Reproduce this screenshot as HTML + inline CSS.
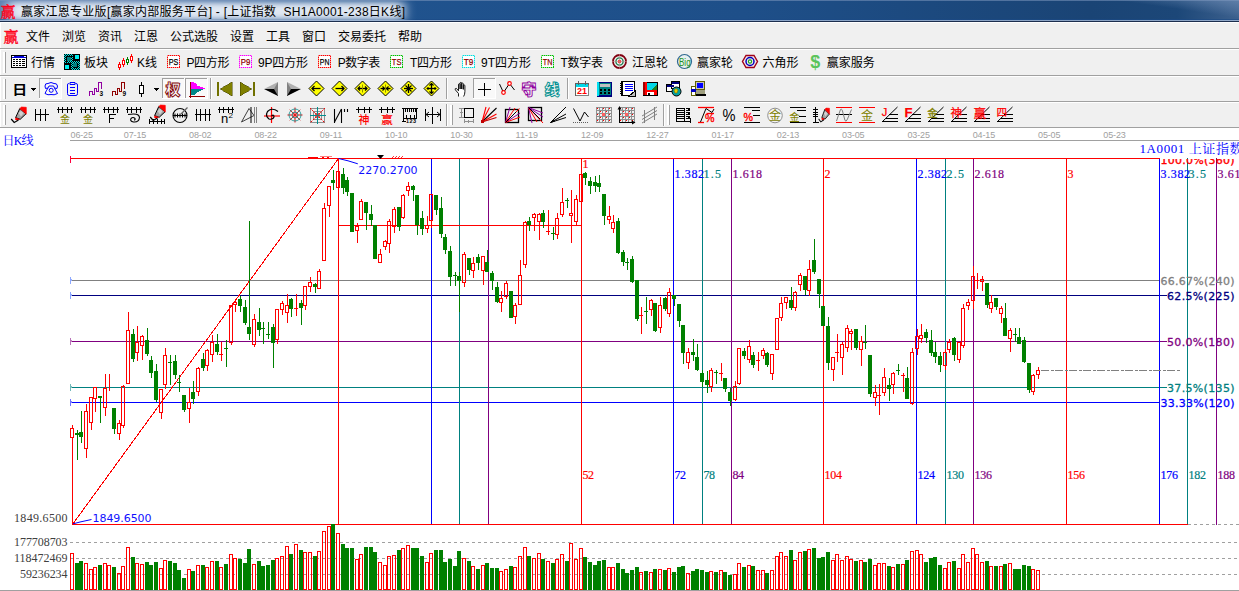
<!DOCTYPE html>
<html lang="zh"><head><meta charset="utf-8"><title>赢家江恩专业版</title>
<style>html,body{margin:0;padding:0;background:#fff;overflow:hidden}svg{display:block}
.c{shape-rendering:crispEdges}</style></head>
<body><svg width="1239" height="591" viewBox="0 0 1239 591">
<defs>
<linearGradient id="tb" x1="0" y1="0" x2="1" y2="0"><stop offset="0" stop-color="#5c7fb0"/><stop offset="0.3" stop-color="#20538e"/><stop offset="0.6" stop-color="#1e4f89"/><stop offset="0.88" stop-color="#1a4475"/><stop offset="0.95" stop-color="#1c4778"/><stop offset="1" stop-color="#3d618e"/></linearGradient>
<linearGradient id="glare" x1="0" y1="1" x2="1" y2="0"><stop offset="0.55" stop-color="#6f8db5" stop-opacity="0"/><stop offset="1" stop-color="#6f8db5" stop-opacity="0.7"/></linearGradient>
<filter id="blur" x="-10%" y="-100%" width="120%" height="300%"><feGaussianBlur stdDeviation="6 3"/></filter>
</defs>
<g class="c">
<rect x="0" y="0" width="1239" height="22" fill="url(#tb)" />
<rect x="1100" y="0" width="139" height="20" fill="url(#glare)" />
<rect x="0" y="19" width="1239" height="1" fill="#1a4a85" opacity="0.6"/>
</g>
<rect x="8" y="2" width="396" height="18" fill="#eef3fa" opacity="0.92" filter="url(#blur)"/>
<g class="c">
<rect x="0" y="0" width="1239" height="1" fill="#7d97bd" opacity="0.55"/>
<rect x="0" y="20" width="1239" height="1" fill="#a8bcd8" opacity="0.8"/>
<rect x="0" y="21" width="1239" height="1" fill="#1c2e4e" />
<rect x="0" y="22" width="1239" height="106" fill="#f0f0f0" />
<rect x="0" y="22" width="1239" height="1" fill="#ffffff" />
<rect x="0" y="22" width="1" height="106" fill="#ffffff" />
<rect x="0" y="48" width="1240" height="1" fill="#a0a0a0" />
<rect x="0" y="49" width="1240" height="1" fill="#ffffff" />
<rect x="0" y="75" width="1240" height="1" fill="#a0a0a0" />
<rect x="0" y="76" width="1240" height="1" fill="#ffffff" />
<rect x="0" y="101" width="1240" height="1" fill="#a0a0a0" />
<rect x="0" y="102" width="1240" height="1" fill="#ffffff" />
<rect x="0" y="127" width="1240" height="1" fill="#a0a0a0" />
<rect x="0" y="128" width="1239" height="463" fill="#ffffff" />
<rect x="0" y="590" width="1240" height="1" fill="#a0a0a0" />
<rect x="3" y="52" width="2" height="21" fill="#ffffff" />
<rect x="5" y="52" width="1" height="21" fill="#a0a0a0" />
<rect x="3" y="79" width="2" height="20" fill="#ffffff" />
<rect x="5" y="79" width="1" height="20" fill="#a0a0a0" />
<rect x="3" y="105" width="2" height="20" fill="#ffffff" />
<rect x="5" y="105" width="1" height="20" fill="#a0a0a0" />
</g>
<text x="0.5" y="17" font-size="15" fill="#ff0018" font-family='"Liberation Serif","Noto Serif CJK SC",serif' font-weight="400" text-anchor="start" stroke="#ff0018" stroke-width="0.35">赢</text>
<text x="21" y="15.5" font-size="12" fill="#000" font-family='"Liberation Sans","Noto Sans CJK SC",sans-serif' font-weight="normal" text-anchor="start" textLength="384" lengthAdjust="spacing" >赢家江恩专业版[赢家内部服务平台] - [上证指数&#160; SH1A0001-238日K线]</text>
<text x="3.5" y="42" font-size="15" fill="#ff0018" font-family='"Liberation Serif","Noto Serif CJK SC",serif' font-weight="400" text-anchor="start" stroke="#ff0018" stroke-width="0.35">赢</text>
<text x="26" y="40.5" font-size="12" fill="#000" font-family='"Liberation Sans","Noto Sans CJK SC",sans-serif' font-weight="normal" text-anchor="start" >文件</text>
<text x="62" y="40.5" font-size="12" fill="#000" font-family='"Liberation Sans","Noto Sans CJK SC",sans-serif' font-weight="normal" text-anchor="start" >浏览</text>
<text x="98" y="40.5" font-size="12" fill="#000" font-family='"Liberation Sans","Noto Sans CJK SC",sans-serif' font-weight="normal" text-anchor="start" >资讯</text>
<text x="134" y="40.5" font-size="12" fill="#000" font-family='"Liberation Sans","Noto Sans CJK SC",sans-serif' font-weight="normal" text-anchor="start" >江恩</text>
<text x="170" y="40.5" font-size="12" fill="#000" font-family='"Liberation Sans","Noto Sans CJK SC",sans-serif' font-weight="normal" text-anchor="start" >公式选股</text>
<text x="230" y="40.5" font-size="12" fill="#000" font-family='"Liberation Sans","Noto Sans CJK SC",sans-serif' font-weight="normal" text-anchor="start" >设置</text>
<text x="266" y="40.5" font-size="12" fill="#000" font-family='"Liberation Sans","Noto Sans CJK SC",sans-serif' font-weight="normal" text-anchor="start" >工具</text>
<text x="302" y="40.5" font-size="12" fill="#000" font-family='"Liberation Sans","Noto Sans CJK SC",sans-serif' font-weight="normal" text-anchor="start" >窗口</text>
<text x="338" y="40.5" font-size="12" fill="#000" font-family='"Liberation Sans","Noto Sans CJK SC",sans-serif' font-weight="normal" text-anchor="start" >交易委托</text>
<text x="398" y="40.5" font-size="12" fill="#000" font-family='"Liberation Sans","Noto Sans CJK SC",sans-serif' font-weight="normal" text-anchor="start" >帮助</text>
<g transform="translate(11,55)" class="c">
<rect x="0.5" y="0.5" width="15" height="12" fill="#fff" stroke="#000" stroke-width="1"/>
<rect x="1" y="1" width="14" height="2" fill="#0000d8" />
<rect x="1" y="1" width="2" height="1" fill="#fff" />
<rect x="13" y="1" width="2" height="1" fill="#fff" />
<rect x="2" y="4" width="2" height="1" fill="#000" />
<rect x="5" y="4" width="2" height="1" fill="#000" />
<rect x="8" y="4" width="2" height="1" fill="#000" />
<rect x="11" y="4" width="3" height="1" fill="#000" />
<rect x="2" y="6" width="2" height="1" fill="#000" />
<rect x="5" y="6" width="2" height="1" fill="#000" />
<rect x="8" y="6" width="2" height="1" fill="#000" />
<rect x="11" y="6" width="3" height="1" fill="#000" />
<rect x="2" y="8" width="2" height="1" fill="#000" />
<rect x="5" y="8" width="2" height="1" fill="#000" />
<rect x="8" y="8" width="2" height="1" fill="#000" />
<rect x="11" y="8" width="3" height="1" fill="#000" />
<rect x="2" y="10" width="2" height="1" fill="#000" />
<rect x="5" y="10" width="2" height="1" fill="#000" />
<rect x="8" y="10" width="2" height="1" fill="#000" />
<rect x="11" y="10" width="3" height="1" fill="#000" />
</g>
<text x="31" y="66.8" font-size="12" fill="#000" font-family='"Liberation Sans","Noto Sans CJK SC",sans-serif' font-weight="normal" text-anchor="start" >行情</text>
<g transform="translate(64,54)" class="c">
<pattern id="dot" width="2" height="2" patternUnits="userSpaceOnUse"><rect width="2" height="2" fill="#00e8e8"/><rect width="1" height="1" fill="#000"/><rect x="1" y="1" width="1" height="1" fill="#000"/></pattern>
<rect x="0" y="0" width="9" height="9" fill="url(#dot)" />
<rect x="3" y="3" width="4" height="4" fill="#008080" />
<rect x="2" y="2" width="6" height="1" fill="#000" />
<rect x="2" y="2" width="1" height="6" fill="#000" />
<rect x="9" y="0" width="7" height="7" fill="#000" />
<rect x="11" y="1" width="4" height="4" fill="#00f0f0" />
<rect x="0" y="9" width="7" height="7" fill="#000" />
<rect x="1" y="11" width="4" height="4" fill="#00f0f0" />
<rect x="7" y="7" width="9" height="9" fill="url(#dot)" />
<rect x="9" y="9" width="4" height="4" fill="#008080" />
<rect x="13" y="9" width="1" height="5" fill="#000" />
<rect x="9" y="13" width="5" height="1" fill="#000" />
</g>
<text x="84" y="66.8" font-size="12" fill="#000" font-family='"Liberation Sans","Noto Sans CJK SC",sans-serif' font-weight="normal" text-anchor="start" >板块</text>
<g transform="translate(117,54)" class="c">
<rect x="2" y="8" width="1" height="8" fill="#ff0000" />
<rect x="1.5" y="10.5" width="2" height="3" fill="#fff" stroke="#ff0000"/>
<rect x="6" y="4" width="1" height="9" fill="#ff0000" />
<rect x="5.5" y="6.5" width="2" height="4" fill="#fff" stroke="#ff0000"/>
<rect x="10" y="3" width="1" height="8" fill="#008000" />
<rect x="9.5" y="5.5" width="2" height="3" fill="#fff" stroke="#008000"/>
<rect x="14" y="0" width="1" height="9" fill="#ff0000" />
<rect x="13.5" y="2.5" width="2" height="4" fill="#fff" stroke="#ff0000"/>
</g>
<text x="137" y="66.8" font-size="12" fill="#000" font-family='"Liberation Sans","Noto Sans CJK SC",sans-serif' font-weight="normal" text-anchor="start" textLength="20" lengthAdjust="spacing" >K线</text>
<g transform="translate(167,55)" class="c">
<rect x="0.5" y="0.5" width="12" height="12" fill="#fff" stroke="#ff0000" stroke-opacity="0.4"/>
<rect x="0.5" y="0.5" width="12" height="12" fill="none" stroke="#ff0000" stroke-dasharray="1 1"/>
</g>
<text x="168.8" y="65" font-size="9.5" fill="#000" stroke="#000" stroke-width="0.25" font-family='"Liberation Sans","Noto Sans CJK SC",sans-serif' textLength="9.6" lengthAdjust="spacingAndGlyphs">PS</text>
<text x="186.4" y="66.8" font-size="12" fill="#000" font-family='"Liberation Sans","Noto Sans CJK SC",sans-serif' font-weight="normal" text-anchor="start" textLength="43" lengthAdjust="spacing" >P四方形</text>
<g transform="translate(239,55)" class="c">
<rect x="0.5" y="0.5" width="12" height="12" fill="#fff" stroke="#ff00ff" stroke-opacity="0.4"/>
<rect x="0.5" y="0.5" width="12" height="12" fill="none" stroke="#ff00ff" stroke-dasharray="1 1"/>
</g>
<text x="240.8" y="65" font-size="9.5" fill="#900000" stroke="#900000" stroke-width="0.25" font-family='"Liberation Sans","Noto Sans CJK SC",sans-serif' textLength="9.6" lengthAdjust="spacingAndGlyphs">P9</text>
<text x="258" y="66.8" font-size="12" fill="#000" font-family='"Liberation Sans","Noto Sans CJK SC",sans-serif' font-weight="normal" text-anchor="start" textLength="50" lengthAdjust="spacing" >9P四方形</text>
<g transform="translate(318,55)" class="c">
<rect x="0.5" y="0.5" width="12" height="12" fill="#fff" stroke="#ff0000" stroke-opacity="0.4"/>
<rect x="0.5" y="0.5" width="12" height="12" fill="none" stroke="#ff0000" stroke-dasharray="1 1"/>
</g>
<text x="319.8" y="65" font-size="9.5" fill="#000" stroke="#000" stroke-width="0.25" font-family='"Liberation Sans","Noto Sans CJK SC",sans-serif' textLength="9.6" lengthAdjust="spacingAndGlyphs">PN</text>
<text x="337.7" y="66.8" font-size="12" fill="#000" font-family='"Liberation Sans","Noto Sans CJK SC",sans-serif' font-weight="normal" text-anchor="start" textLength="42.5" lengthAdjust="spacing" >P数字表</text>
<g transform="translate(390,55)" class="c">
<rect x="0.5" y="0.5" width="12" height="12" fill="#fff" stroke="#00c000" stroke-opacity="0.4"/>
<rect x="0.5" y="0.5" width="12" height="12" fill="none" stroke="#00c000" stroke-dasharray="1 1"/>
</g>
<text x="391.8" y="65" font-size="9.5" fill="#900000" stroke="#900000" stroke-width="0.25" font-family='"Liberation Sans","Noto Sans CJK SC",sans-serif' textLength="9.6" lengthAdjust="spacingAndGlyphs">TS</text>
<text x="410" y="66.8" font-size="12" fill="#000" font-family='"Liberation Sans","Noto Sans CJK SC",sans-serif' font-weight="normal" text-anchor="start" textLength="42" lengthAdjust="spacing" >T四方形</text>
<g transform="translate(462,55)" class="c">
<rect x="0.5" y="0.5" width="12" height="12" fill="#fff" stroke="#00e0e0" stroke-opacity="0.4"/>
<rect x="0.5" y="0.5" width="12" height="12" fill="none" stroke="#00e0e0" stroke-dasharray="1 1"/>
</g>
<text x="463.8" y="65" font-size="9.5" fill="#900000" stroke="#900000" stroke-width="0.25" font-family='"Liberation Sans","Noto Sans CJK SC",sans-serif' textLength="9.6" lengthAdjust="spacingAndGlyphs">T9</text>
<text x="481" y="66.8" font-size="12" fill="#000" font-family='"Liberation Sans","Noto Sans CJK SC",sans-serif' font-weight="normal" text-anchor="start" textLength="50" lengthAdjust="spacing" >9T四方形</text>
<g transform="translate(541,55)" class="c">
<rect x="0.5" y="0.5" width="12" height="12" fill="#fff" stroke="#00c000" stroke-opacity="0.4"/>
<rect x="0.5" y="0.5" width="12" height="12" fill="none" stroke="#00c000" stroke-dasharray="1 1"/>
</g>
<text x="542.8" y="65" font-size="9.5" fill="#900000" stroke="#900000" stroke-width="0.25" font-family='"Liberation Sans","Noto Sans CJK SC",sans-serif' textLength="9.6" lengthAdjust="spacingAndGlyphs">TN</text>
<text x="560.4" y="66.8" font-size="12" fill="#000" font-family='"Liberation Sans","Noto Sans CJK SC",sans-serif' font-weight="normal" text-anchor="start" textLength="42.6" lengthAdjust="spacing" >T数字表</text>
<g transform="translate(612,54)">
<circle cx="7.5" cy="7.5" r="6.5" stroke="#800010" fill="none" stroke-width="1.8"/>
<circle cx="7.5" cy="7.5" r="3.6" stroke="#208050" fill="none" stroke-width="1.4"/>
<circle cx="7.5" cy="7.5" r="1.2" stroke="#ff0000" fill="#ff0000" stroke-width="1"/>
<line x1="7.5" y1="0" x2="7.5" y2="15" stroke="#c09090" stroke-width="0.6" />
<line x1="0" y1="7.5" x2="15" y2="7.5" stroke="#c09090" stroke-width="0.6" />
</g>
<text x="632" y="66.8" font-size="12" fill="#000" font-family='"Liberation Sans","Noto Sans CJK SC",sans-serif' font-weight="normal" text-anchor="start" >江恩轮</text>
<g transform="translate(677,54)">
<circle cx="7.5" cy="7.5" r="7" stroke="#306890" fill="#e8f0f0" stroke-width="1.2"/>
</g>
<text x="679" y="65.5" font-size="11" fill="#209020" font-family='"Liberation Sans","Noto Sans CJK SC",sans-serif' textLength="11.6" lengthAdjust="spacingAndGlyphs">Big</text>
<text x="697" y="66.8" font-size="12" fill="#000" font-family='"Liberation Sans","Noto Sans CJK SC",sans-serif' font-weight="normal" text-anchor="start" >赢家轮</text>
<g transform="translate(742,54)">
<polygon points="4,1.5 12,1.5 15.5,7.5 12,13.5 4,13.5 0.5,7.5" fill="#f4e8e8" stroke="#a00018" stroke-width="1.4" />
<circle cx="8" cy="7.5" r="4" stroke="#0000c0" fill="none" stroke-width="1.5"/>
<circle cx="8" cy="7.5" r="1.6" stroke="#20a020" fill="#fff" stroke-width="1.2"/>
</g>
<text x="762.4" y="66.8" font-size="12" fill="#000" font-family='"Liberation Sans","Noto Sans CJK SC",sans-serif' font-weight="normal" text-anchor="start" >六角形</text>
<text x="815.3" y="68" font-size="18" fill="#5cc45c" font-family='"Liberation Sans","Noto Sans CJK SC",sans-serif' font-weight="bold" text-anchor="middle" >$</text>
<text x="826.7" y="66.8" font-size="12" fill="#000" font-family='"Liberation Sans","Noto Sans CJK SC",sans-serif' font-weight="normal" text-anchor="start" >赢家服务</text>
<text transform="translate(12.3,94.2) scale(1.15,1)" font-size="13" font-weight="700" font-family='"Liberation Sans","Noto Sans CJK SC",sans-serif' fill="#000">日</text>
<g transform="translate(0,0)" class="c">
<polygon points="30,88 36,88 33,91" fill="#000" stroke="none" stroke-width="1" />
</g>
<g transform="translate(39,78)" class="c">
<rect x="0" y="0" width="23" height="21" fill="#f9f9f9" />
<rect x="0" y="0" width="23" height="1" fill="#a0a0a0" />
<rect x="0" y="0" width="1" height="21" fill="#a0a0a0" />
<rect x="0" y="20" width="23" height="1" fill="#fff" />
<rect x="22" y="0" width="1" height="21" fill="#fff" />
</g>
<g transform="translate(44,81)">
<path d="M1,5 Q1,2 4,2.5 Q7,0.5 10,2.5 Q13,2 13.5,5 L13,7.5 L10.5,7 L9.5,5 L5,5 L4,7 L1.5,7.5 Z M4,7 Q2,10 1,12.5 Q4,14.5 7,13.5 Q10,14.5 13.5,12.5 Q12,10 10.5,7" stroke="#0000ff" stroke-width="1" fill="none" />
<circle cx="7.2" cy="9.3" r="2" stroke="#0000ff" fill="none" stroke-width="1"/>
</g>
<g transform="translate(66,81)">
<path d="M3,2.5 H2.5 Q1.5,2.5 1.5,4 V12.5 Q1.5,14.5 3,14.5 H10 Q11.5,14.5 11.5,12.5 V4 Q11.5,2.5 10,2.5 H9.5 M4,1.5 H9 V3.5 H4 Z" stroke="#0000ff" stroke-width="1" fill="none" />
<line x1="4" y1="6.5" x2="9" y2="6.5" stroke="#0000ff" stroke-width="1" />
<line x1="4" y1="9.5" x2="9" y2="9.5" stroke="#0000ff" stroke-width="1" />
<line x1="4" y1="12.5" x2="9" y2="12.5" stroke="#0000ff" stroke-width="1" />
</g>
<g transform="translate(89,81)" class="c">
<polyline points="0.5,14.5 0.5,10.5 3.5,10.5 3.5,13.5 5.5,13.5 5.5,7.5 7.5,7.5 7.5,10.5 9.5,10.5 9.5,1.5 12.5,1.5 12.5,7.5" stroke="#9000a0" stroke-width="1" fill="none" />
</g>
<text x="99.5" y="96.3" font-size="6.5" fill="#000" font-family='"Liberation Sans","Noto Sans CJK SC",sans-serif' font-weight="bold" text-anchor="start" >3</text>
<g transform="translate(112,81)" class="c">
<polyline points="0.5,14.5 0.5,10.5 3.5,10.5 3.5,13.5 5.5,13.5 5.5,7.5 7.5,7.5 7.5,10.5 9.5,10.5 9.5,1.5 12.5,1.5 12.5,7.5" stroke="#900000" stroke-width="1" fill="none" />
</g>
<text x="122.5" y="96.3" font-size="6.5" fill="#000" font-family='"Liberation Sans","Noto Sans CJK SC",sans-serif' font-weight="bold" text-anchor="start" >9</text>
<g transform="translate(139,81)" class="c">
<rect x="2" y="1" width="1" height="15" fill="#000" />
<rect x="0.5" y="4.5" width="4" height="8" fill="#fff" stroke="#000"/>
<polygon points="14,7 20,7 17,10" fill="#000" stroke="none" stroke-width="1" />
</g>
<g transform="translate(162,78)" class="c">
<rect x="0" y="0" width="23" height="21" fill="#f9f9f9" />
<rect x="0" y="0" width="23" height="1" fill="#a0a0a0" />
<rect x="0" y="0" width="1" height="21" fill="#a0a0a0" />
<rect x="0" y="20" width="23" height="1" fill="#fff" />
<rect x="22" y="0" width="1" height="21" fill="#fff" />
</g>
<g transform="translate(185,78)" class="c">
<rect x="0" y="0" width="23" height="21" fill="#f9f9f9" />
<rect x="0" y="0" width="23" height="1" fill="#a0a0a0" />
<rect x="0" y="0" width="1" height="21" fill="#a0a0a0" />
<rect x="0" y="20" width="23" height="1" fill="#fff" />
<rect x="22" y="0" width="1" height="21" fill="#fff" />
</g>
<text x="165.5" y="95" font-size="15" fill="#fbfbfb" font-family='"Liberation Sans","Noto Sans CJK SC",sans-serif' font-weight="900" text-anchor="start" stroke="#800000" stroke-width="0.9">权</text>
<g transform="translate(0,0)" class="c">
<polygon points="191,82 193,82 197,84 196,85 198,86 201,87 205,88 205,89 191,89" fill="#ff00ff" stroke="none" stroke-width="1" />
<polygon points="191,89 204,89 201,90.5 199,91.5 197,92.5 196,94 194,95 191,95" fill="#008888" stroke="none" stroke-width="1" />
<rect x="190" y="82" width="1" height="16" fill="#900000" />
<rect x="189" y="96" width="16" height="1" fill="#900000" />
</g>
<g class="c">
<rect x="210" y="78" width="1" height="21" fill="#a0a0a0" />
<rect x="211" y="78" width="1" height="21" fill="#fff" />
</g>
<g transform="translate(217,81)" class="c">
<rect x="0" y="1" width="2" height="14" fill="#707000" />
<polygon points="3,8 15,1 15,15" fill="#808000" stroke="#404000" stroke-width="0.5" />
</g>
<g transform="translate(240,81)" class="c">
<rect x="13" y="1" width="2" height="14" fill="#707000" />
<polygon points="12,8 0,1 0,15" fill="#808000" stroke="#404000" stroke-width="0.5" />
</g>
<g transform="translate(264,81)">
<polygon points="0,8 14,1 14,8" fill="#b0b0b0" stroke="none" stroke-width="1" />
<polygon points="0,8 14,8 14,15" fill="#000" stroke="none" stroke-width="1" />
<polygon points="14,1 14,15 10,8" fill="#808080" stroke="none" stroke-width="1" />
</g>
<g transform="translate(287,81)">
<polygon points="14,8 0,1 0,8" fill="#b0b0b0" stroke="none" stroke-width="1" />
<polygon points="14,8 0,8 0,15" fill="#000" stroke="none" stroke-width="1" />
<polygon points="0,1 0,15 4,8" fill="#808080" stroke="none" stroke-width="1" />
</g>
<g transform="translate(316.5,88.5)">
<polygon points="-7.5,0 0,-7.5 7.5,0 0,7.5" fill="#ffff00" stroke="#000" stroke-width="1" />
<line x1="-4.5" y1="0" x2="4" y2="0" stroke="#000" stroke-width="1.3" />
<polyline points="-2,-2.5 -4.5,0 -2,2.5" stroke="#000" stroke-width="1.3" fill="none" />
</g>
<g transform="translate(339.5,88.5)">
<polygon points="-7.5,0 0,-7.5 7.5,0 0,7.5" fill="#ffff00" stroke="#000" stroke-width="1" />
<line x1="-4" y1="0" x2="4.5" y2="0" stroke="#000" stroke-width="1.3" />
<polyline points="2,-2.5 4.5,0 2,2.5" stroke="#000" stroke-width="1.3" fill="none" />
</g>
<g transform="translate(362.5,88.5)">
<polygon points="-7.5,0 0,-7.5 7.5,0 0,7.5" fill="#ffff00" stroke="#000" stroke-width="1" />
<line x1="-4.5" y1="0" x2="4.5" y2="0" stroke="#000" stroke-width="1.3" />
<polyline points="-2.5,-2 -4.5,0 -2.5,2" stroke="#000" stroke-width="1.2" fill="none" />
<polyline points="2.5,-2 4.5,0 2.5,2" stroke="#000" stroke-width="1.2" fill="none" />
<line x1="0" y1="-4" x2="0" y2="4" stroke="#909000" stroke-width="1" />
</g>
<g transform="translate(385.5,88.5)">
<polygon points="-7.5,0 0,-7.5 7.5,0 0,7.5" fill="#ffff00" stroke="#000" stroke-width="1" />
<line x1="-5" y1="0" x2="5" y2="0" stroke="#000" stroke-width="1.3" />
<polyline points="-3,-2 -1,0 -3,2" stroke="#000" stroke-width="1.2" fill="none" />
<polyline points="3,-2 1,0 3,2" stroke="#000" stroke-width="1.2" fill="none" />
<line x1="0" y1="-4" x2="0" y2="4" stroke="#909000" stroke-width="1" />
</g>
<g transform="translate(408.5,88.5)">
<polygon points="-7.5,0 0,-7.5 7.5,0 0,7.5" fill="#ffff00" stroke="#000" stroke-width="1" />
<line x1="-4.5" y1="0" x2="4.5" y2="0" stroke="#000" stroke-width="1.3" />
<line x1="0" y1="-4.5" x2="0" y2="4.5" stroke="#000" stroke-width="1.3" />
<line x1="-3" y1="-3" x2="3" y2="3" stroke="#000" stroke-width="1.1" />
<line x1="-3" y1="3" x2="3" y2="-3" stroke="#000" stroke-width="1.1" />
</g>
<g transform="translate(431.5,88.5)">
<polygon points="-7.5,0 0,-7.5 7.5,0 0,7.5" fill="#ffff00" stroke="#000" stroke-width="1" />
<line x1="-4.5" y1="0" x2="4.5" y2="0" stroke="#000" stroke-width="1.3" />
<line x1="0" y1="-5" x2="0" y2="5" stroke="#000" stroke-width="1.3" />
<polyline points="-2,-3 0,-5 2,-3" stroke="#000" stroke-width="1.1" fill="none" />
<polyline points="-2,3 0,5 2,3" stroke="#000" stroke-width="1.1" fill="none" />
<polyline points="-3,-1.5 -4.5,0 -3,1.5" stroke="#000" stroke-width="1" fill="none" />
<polyline points="3,-1.5 4.5,0 3,1.5" stroke="#000" stroke-width="1" fill="none" />
</g>
<g class="c">
<rect x="446" y="78" width="1" height="21" fill="#a0a0a0" />
<rect x="447" y="78" width="1" height="21" fill="#fff" />
</g>
<g transform="translate(454,81)">
<path d="M4.5,15.5 L4.5,12.5 L1.3,8.8 Q0.8,7.2 2.4,7.4 L4.5,9.8 L4.5,3.2 Q5.3,2.2 6.1,3.2 L6.1,8 L6.1,1.8 Q6.9,0.8 7.7,1.8 L7.7,8 L7.7,2.6 Q8.5,1.6 9.3,2.6 L9.3,8.4 L9.3,4.4 Q10.1,3.4 10.9,4.4 L10.9,10.5 Q10.9,13.5 9.6,15.5" stroke="#000" stroke-width="0.9" fill="#fff" />
</g>
<g transform="translate(473,78)" class="c">
<rect x="0" y="0" width="23" height="21" fill="#f9f9f9" />
<rect x="0" y="0" width="23" height="1" fill="#a0a0a0" />
<rect x="0" y="0" width="1" height="21" fill="#a0a0a0" />
<rect x="0" y="20" width="23" height="1" fill="#fff" />
<rect x="22" y="0" width="1" height="21" fill="#fff" />
</g>
<g transform="translate(484,88.5)" class="c">
<rect x="-6" y="0" width="13" height="1" fill="#000" />
<rect x="0" y="-6" width="1" height="13" fill="#000" />
</g>
<g transform="translate(499,81)">
<polyline points="0.5,3 4.5,11.5 10.5,2.5 15.5,9" stroke="#000" stroke-width="1" fill="none" />
<circle cx="4.5" cy="11.5" r="1.8" stroke="#ff0000" fill="#fff" stroke-width="1.2"/>
<circle cx="10.5" cy="2.5" r="1.8" stroke="#ff0000" fill="#fff" stroke-width="1.2"/>
</g>
<text x="521.5" y="94.5" font-size="15" fill="#f4f4f4" font-family='"Liberation Sans","Noto Sans CJK SC",sans-serif' font-weight="900" text-anchor="start" stroke="#9000a0" stroke-width="0.9">守</text>
<text x="544.5" y="94.5" font-size="15" fill="#f4f4f4" font-family='"Liberation Sans","Noto Sans CJK SC",sans-serif' font-weight="900" text-anchor="start" stroke="#009090" stroke-width="0.9">线</text>
<g class="c">
<rect x="567" y="78" width="1" height="21" fill="#a0a0a0" />
<rect x="568" y="78" width="1" height="21" fill="#fff" />
</g>
<g transform="translate(575,81)" class="c">
<rect x="0.5" y="2.5" width="13" height="12" fill="#fff" stroke="#606060"/>
<rect x="1" y="3" width="12" height="3" fill="#00d8e8" />
<rect x="1" y="14" width="13" height="1" fill="#808080" />
<rect x="13" y="4" width="1" height="11" fill="#808080" />
<rect x="3" y="0" width="1" height="4" fill="#606060" />
<rect x="10" y="0" width="1" height="4" fill="#606060" />
</g>
<text x="582" y="93.5" font-size="9" fill="#ff0000" font-family='"Liberation Sans","Noto Sans CJK SC",sans-serif' font-weight="bold" text-anchor="middle" textLength="10" lengthAdjust="spacing" >21</text>
<g transform="translate(597,81)" class="c">
<rect x="0.5" y="1.5" width="14" height="13" fill="#008080" stroke="#000080"/>
<rect x="0" y="1" width="2" height="14" fill="#00e0f0" />
<rect x="3" y="3" width="10" height="3" fill="#c0c0c0" />
<rect x="3" y="8" width="2" height="2" fill="#000" />
<rect x="3" y="11" width="2" height="2" fill="#000" />
<rect x="7" y="8" width="2" height="2" fill="#000" />
<rect x="7" y="11" width="2" height="2" fill="#000" />
<rect x="11" y="8" width="2" height="2" fill="#000" />
<rect x="11" y="11" width="2" height="2" fill="#000" />
<rect x="0" y="15" width="15" height="1" fill="#000080" />
</g>
<g transform="translate(620,81)" class="c">
<rect x="1.5" y="0.5" width="13" height="14" fill="#fff" stroke="#000"/>
<rect x="2" y="1" width="1" height="14" fill="#000" />
<rect x="5" y="3" width="8" height="1" fill="#0000ff" />
<rect x="5" y="5" width="8" height="1" fill="#0000ff" />
<rect x="5" y="7" width="8" height="1" fill="#0000ff" />
<rect x="5" y="9" width="8" height="1" fill="#0000ff" />
<polygon points="9,15 15,15 15,10" fill="#c0c0c0" stroke="#000" stroke-width="1" />
<rect x="0" y="2" width="2" height="1" fill="#000" />
<rect x="0" y="4" width="2" height="1" fill="#000" />
<rect x="0" y="6" width="2" height="1" fill="#000" />
<rect x="0" y="8" width="2" height="1" fill="#000" />
<rect x="0" y="10" width="2" height="1" fill="#000" />
<rect x="0" y="12" width="2" height="1" fill="#000" />
</g>
<g transform="translate(643,81)" class="c">
<rect x="0" y="1" width="15" height="14" fill="#ff0000" />
<rect x="0" y="1" width="2" height="14" fill="#a00000" />
<rect x="4" y="1" width="11" height="8" fill="#00d8e8" />
<polygon points="15,3 15,9 8,9" fill="#208020" stroke="none" stroke-width="1" />
<rect x="4" y="1" width="11" height="1" fill="#000" />
<rect x="14" y="1" width="1" height="14" fill="#000" />
<rect x="4" y="11" width="7" height="4" fill="#fff" />
<rect x="5" y="12" width="2" height="3" fill="#000" />
<rect x="0" y="14" width="15" height="1" fill="#000" />
</g>
<g transform="translate(666,81)" class="c">
<rect x="0.5" y="3.5" width="8" height="7" fill="#fff" stroke="#000"/>
<rect x="5.5" y="0.5" width="8" height="7" fill="#fff" stroke="#000"/>
<rect x="6" y="1" width="7" height="2" fill="#000080" />
<rect x="1" y="4" width="7" height="2" fill="#000080" />
</g>
<g transform="translate(666,81)">
<circle cx="10.5" cy="10.5" r="4.5" stroke="#000" fill="#00a0a0" stroke-width="1"/>
<path d="M8,9 L10,7.5 L12,9 L11,12 L9,12 Z" stroke="#806000" stroke-width="0.5" fill="#e0d000" />
</g>
<g transform="translate(690,81)" class="c">
<rect x="5.5" y="0.5" width="9" height="8" fill="#c0c0c0" stroke="#606000"/>
<rect x="7" y="2" width="6" height="5" fill="#0000ff" />
<rect x="4" y="9" width="11" height="4" fill="#a0a080" />
<rect x="4" y="13" width="12" height="2" fill="#000" />
<rect x="1" y="5" width="4" height="9" fill="#fff" stroke="#606000" transform="translate(.5,.5)"/>
<rect x="1" y="8" width="5" height="3" fill="#0000c0" />
</g>
<g transform="translate(11,107)">
<polygon points="8.8,1.5 15,6.8 9.2,12.3 4.6,10.6" fill="#a4a4a4" stroke="#000" stroke-width="1" />
<polygon points="8.8,1.5 10.5,0 15.3,0.3 15.4,7.2 15,6.8" fill="#ff0000" stroke="#ff0000" stroke-width="0.6" />
<polygon points="4.6,10.6 9.2,12.3 6,13.6 4,12.6" fill="#ff0000" stroke="none" stroke-width="1" />
<polygon points="7.5,6 10,3.8 12.5,6 10,9.5" fill="#d0d0d0" stroke="none" stroke-width="1" />
<polyline points="0.2,12 3.2,15.4 7.5,13" stroke="#000" stroke-width="1.2" fill="none" />
</g>
<g transform="translate(35,107)" class="c">
<rect x="0" y="2" width="1" height="12" fill="#000" />
<rect x="5" y="2" width="1" height="12" fill="#000" />
<rect x="10" y="2" width="1" height="12" fill="#000" />
<rect x="0" y="7" width="14" height="1" fill="#000" />
</g>
<g transform="translate(57,107)" class="c">
<rect x="0" y="2" width="16" height="1" fill="#000" />
<rect x="1" y="0" width="1" height="6" fill="#000" />
<rect x="5" y="0" width="1" height="6" fill="#000" />
<rect x="10" y="0" width="1" height="6" fill="#000" />
<rect x="14" y="0" width="1" height="6" fill="#000" />
</g>
<text x="65" y="123" font-size="10" fill="#808000" font-family='"Liberation Sans","Noto Sans CJK SC",sans-serif' font-weight="normal" text-anchor="middle" >金</text>
<g transform="translate(80,107)" class="c">
<rect x="0" y="2" width="16" height="1" fill="#000" />
<rect x="1" y="0" width="1" height="6" fill="#000" />
<rect x="5" y="0" width="1" height="6" fill="#000" />
<rect x="10" y="0" width="1" height="6" fill="#000" />
<rect x="14" y="0" width="1" height="6" fill="#000" />
</g>
<text x="88" y="123" font-size="10" fill="#808000" font-family='"Liberation Sans","Noto Sans CJK SC",sans-serif' font-weight="normal" text-anchor="middle" >金</text>
<g transform="translate(103,107)" class="c">
<rect x="0" y="2" width="16" height="1" fill="#000" />
<rect x="1" y="0" width="1" height="6" fill="#000" />
<rect x="5" y="0" width="1" height="6" fill="#000" />
<rect x="10" y="0" width="1" height="6" fill="#000" />
<rect x="14" y="0" width="1" height="6" fill="#000" />
<rect x="6" y="7" width="1" height="9" fill="#000" />
<rect x="6" y="7" width="7" height="1" fill="#000" />
<rect x="6" y="11" width="5" height="1" fill="#000" />
</g>
<g transform="translate(126,107)" class="c">
<rect x="0" y="2" width="16" height="1" fill="#000" />
<rect x="1" y="0" width="1" height="6" fill="#000" />
<rect x="5" y="0" width="1" height="6" fill="#000" />
<rect x="10" y="0" width="1" height="6" fill="#000" />
<rect x="14" y="0" width="1" height="6" fill="#000" />
</g>
<g transform="translate(126,107)">
<path d="M2,7.5 Q13,5.5 13.5,10.5 Q13,15.5 7.5,15 Q3.5,14 5,11.5 Q7,9.5 9,11.5 Q9.5,13 8,13" stroke="#000" stroke-width="1.1" fill="none" />
</g>
<g transform="translate(150,105)">
<polygon points="8.8,1.5 15,6.8 9.2,12.3 4.6,10.6" fill="#a4a4a4" stroke="#000" stroke-width="1" />
<polygon points="8.8,1.5 10.5,0 15.3,0.3 15.4,7.2 15,6.8" fill="#ff0000" stroke="#ff0000" stroke-width="0.6" />
<polygon points="4.6,10.6 9.2,12.3 6,13.6 4,12.6" fill="#ff0000" stroke="none" stroke-width="1" />
<polygon points="7.5,6 10,3.8 12.5,6 10,9.5" fill="#d0d0d0" stroke="none" stroke-width="1" />
<polyline points="0.2,12 3.2,15.4 7.5,13" stroke="#000" stroke-width="1.2" fill="none" />
</g>
<g transform="translate(149,107)" class="c">
<rect x="0" y="14" width="16" height="1" fill="#000" />
<rect x="0" y="12" width="1" height="5" fill="#000" />
<rect x="4" y="12" width="1" height="5" fill="#000" />
<rect x="8" y="12" width="1" height="5" fill="#000" />
<rect x="12" y="12" width="1" height="5" fill="#000" />
<rect x="15" y="12" width="1" height="5" fill="#000" />
</g>
<g transform="translate(172,107)">
<circle cx="8" cy="8.5" r="7" stroke="#000" fill="none" stroke-width="1.1"/>
<line x1="1" y1="8.5" x2="15" y2="8.5" stroke="#000" stroke-width="1.1" />
<line x1="3" y1="6.5" x2="3" y2="10.5" stroke="#000" stroke-width="1" />
<line x1="5.5" y1="6.5" x2="5.5" y2="10.5" stroke="#000" stroke-width="1" />
<line x1="8" y1="6.5" x2="8" y2="10.5" stroke="#000" stroke-width="1" />
<line x1="10.5" y1="6.5" x2="10.5" y2="10.5" stroke="#000" stroke-width="1" />
<line x1="13" y1="6.5" x2="13" y2="10.5" stroke="#000" stroke-width="1" />
<line x1="9" y1="7" x2="15.5" y2="0.5" stroke="#606060" stroke-width="1.2" />
</g>
<g transform="translate(195,107)" class="c">
<rect x="1" y="2" width="1" height="12" fill="#000" />
<rect x="5" y="2" width="1" height="12" fill="#000" />
<rect x="10" y="2" width="1" height="12" fill="#000" />
<rect x="14" y="2" width="1" height="12" fill="#000" />
<rect x="0" y="7" width="16" height="1" fill="#000" />
</g>
<g transform="translate(218,107)" class="c">
<rect x="0" y="2" width="16" height="1" fill="#000" />
<rect x="1" y="0" width="1" height="6" fill="#000" />
<rect x="5" y="0" width="1" height="6" fill="#000" />
<rect x="10" y="0" width="1" height="6" fill="#000" />
<rect x="14" y="0" width="1" height="6" fill="#000" />
</g>
<text x="221" y="123" font-size="13" fill="#000" font-family='"Liberation Sans","Noto Sans CJK SC",sans-serif' font-weight="normal" text-anchor="start" >n</text>
<text x="228.5" y="118" font-size="8" fill="#000" font-family='"Liberation Sans","Noto Sans CJK SC",sans-serif' font-weight="normal" text-anchor="start" >2</text>
<g transform="translate(241,107)">
<polygon points="0.5,15 8,1.5 13,8.5" fill="none" stroke="#404040" stroke-width="1" />
<line x1="10" y1="0" x2="10" y2="16" stroke="#000" stroke-width="1" />
<line x1="13.5" y1="0" x2="13.5" y2="16" stroke="#808080" stroke-width="1" />
<line x1="15.5" y1="0" x2="15.5" y2="16" stroke="#808080" stroke-width="1" />
</g>
<g transform="translate(264,107)">
<line x1="0" y1="9" x2="16" y2="9" stroke="#ff0000" stroke-width="1.2" />
<line x1="7.5" y1="0" x2="7.5" y2="16" stroke="#ff0000" stroke-width="1.2" />
<path d="M7.5,9 Q10,7 10,10 Q9,13 5,12 Q1,9 3.5,4.5 Q8,0 14,4.5" stroke="#000" stroke-width="1.2" fill="none" />
</g>
<g transform="translate(287,107)">
<line x1="8.0" y1="8" x2="15.5" y2="8.0" stroke="#ff0000" stroke-width="1" />
<line x1="8.0" y1="8" x2="13.303300858899107" y2="13.303300858899107" stroke="#d03030" stroke-width="1" />
<line x1="8.0" y1="8" x2="8.0" y2="15.5" stroke="#ff0000" stroke-width="1" />
<line x1="8.0" y1="8" x2="2.6966991411008943" y2="13.303300858899107" stroke="#d03030" stroke-width="1" />
<line x1="8.0" y1="8" x2="0.5" y2="8.000000000000002" stroke="#ff0000" stroke-width="1" />
<line x1="8.0" y1="8" x2="2.6966991411008925" y2="2.6966991411008943" stroke="#d03030" stroke-width="1" />
<line x1="8.0" y1="8" x2="7.999999999999998" y2="0.5" stroke="#ff0000" stroke-width="1" />
<line x1="8.0" y1="8" x2="13.303300858899105" y2="2.6966991411008925" stroke="#d03030" stroke-width="1" />
<circle cx="8" cy="8" r="3" stroke="#009090" fill="none" stroke-width="0.8"/>
<circle cx="8" cy="8" r="6" stroke="#009090" fill="none" stroke-width="0.8"/>
</g>
<g transform="translate(310,107)" class="c">
<rect x="0.5" y="1.5" width="14" height="14" fill="none" stroke="#909090"/>
<rect x="3.5" y="4.5" width="8" height="8" fill="none" stroke="#909090"/>
<rect x="5.5" y="6.5" width="4" height="4" fill="#ff8080" stroke="#c06060"/>
<rect x="0" y="8" width="16" height="1" fill="#009090" />
<rect x="7" y="0" width="1" height="17" fill="#009090" />
</g>
<g transform="translate(310,107)">
<line x1="0" y1="1" x2="15" y2="16" stroke="#ff0000" stroke-width="1" stroke-dasharray="2 1"/>
<line x1="15" y1="1" x2="0" y2="16" stroke="#ff0000" stroke-width="1" stroke-dasharray="2 1"/>
</g>
<g transform="translate(333,107)">
<line x1="1.5" y1="2" x2="1.5" y2="16" stroke="#000" stroke-width="1.1" />
<line x1="1.5" y1="15" x2="8.5" y2="2" stroke="#000" stroke-width="1.1" />
<line x1="8.5" y1="2" x2="8.5" y2="16" stroke="#000" stroke-width="1.1" />
<line x1="11.5" y1="2" x2="11.5" y2="5" stroke="#000" stroke-width="1.1" />
<line x1="14.5" y1="2" x2="14.5" y2="5" stroke="#000" stroke-width="1.1" />
</g>
<g transform="translate(356,107)" class="c">
<rect x="0" y="2" width="16" height="1" fill="#000" />
<rect x="2" y="0" width="1" height="6" fill="#000" />
<rect x="8" y="0" width="1" height="6" fill="#000" />
<rect x="13" y="0" width="1" height="6" fill="#000" />
</g>
<text x="364" y="123.5" font-size="11" fill="#ff0000" font-family='"Liberation Sans","Noto Sans CJK SC",sans-serif' font-weight="500" text-anchor="middle" >神</text>
<g transform="translate(379,107)" class="c">
<rect x="0" y="2" width="16" height="1" fill="#000" />
<rect x="2" y="0" width="1" height="6" fill="#000" />
<rect x="8" y="0" width="1" height="6" fill="#000" />
<rect x="13" y="0" width="1" height="6" fill="#000" />
</g>
<text x="387" y="123.5" font-size="11.5" fill="#ff0000" font-family='"Liberation Sans","Noto Sans CJK SC",sans-serif' font-weight="500" text-anchor="middle" >赢</text>
<g transform="translate(402,107)" class="c">
<rect x="0" y="1" width="16" height="1" fill="#000" />
<rect x="1" y="1" width="1" height="14" fill="#000" />
<rect x="14" y="1" width="1" height="11" fill="#000" />
<rect x="1" y="11" width="14" height="1" fill="#000" />
<rect x="3" y="1" width="1" height="4" fill="#000" />
<rect x="5" y="1" width="1" height="4" fill="#000" />
<rect x="7" y="1" width="1" height="4" fill="#000" />
<rect x="9" y="1" width="1" height="4" fill="#000" />
<rect x="11" y="1" width="1" height="4" fill="#000" />
<rect x="13" y="1" width="1" height="4" fill="#000" />
<rect x="4" y="8" width="1" height="3" fill="#000" />
<rect x="8" y="8" width="1" height="3" fill="#000" />
<rect x="12" y="8" width="1" height="3" fill="#000" />
<rect x="0" y="14" width="4" height="1" fill="#000" />
</g>
<text x="411" y="123" font-size="5.5" fill="#000" font-family='"Liberation Sans","Noto Sans CJK SC",sans-serif' font-weight="bold" text-anchor="middle" textLength="10" lengthAdjust="spacing" >123</text>
<g transform="translate(425,107)" class="c">
<rect x="0" y="2" width="1" height="12" fill="#000" />
<rect x="7" y="0" width="1" height="17" fill="#000" />
<rect x="15" y="2" width="1" height="12" fill="#000" />
<rect x="0" y="7" width="16" height="1" fill="#000" />
</g>
<g transform="translate(425,107)">
<polyline points="4,5 1,7.5 4,10" stroke="#000" stroke-width="1" fill="none" />
<polyline points="12,5 15,7.5 12,10" stroke="#000" stroke-width="1" fill="none" />
</g>
<g class="c">
<rect x="446" y="104" width="1" height="22" fill="#a0a0a0" />
<rect x="447" y="104" width="1" height="22" fill="#fff" />
</g>
<g class="c">
<rect x="450" y="105" width="2" height="20" fill="#ffffff" />
<rect x="452" y="105" width="1" height="20" fill="#a0a0a0" />
</g>
<g transform="translate(459,107)" class="c">
<rect x="5.5" y="1.5" width="9" height="9" fill="none" stroke="#000" stroke-width="1.4"/>
<rect x="2" y="1" width="1" height="10" fill="#909090" />
<rect x="0" y="1" width="5" height="1" fill="#909090" />
<rect x="0" y="10" width="5" height="1" fill="#909090" />
<rect x="1" y="5" width="3" height="1" fill="#909090" />
<rect x="5" y="14" width="10" height="1" fill="#909090" />
<rect x="5" y="12" width="1" height="4" fill="#909090" />
<rect x="14" y="12" width="1" height="4" fill="#909090" />
<rect x="9" y="13" width="1" height="3" fill="#909090" />
</g>
<g transform="translate(481,107)">
<line x1="1" y1="15" x2="5" y2="0" stroke="#ff0000" stroke-width="1.1" />
<line x1="1" y1="15" x2="8.5" y2="0.5" stroke="#ff0000" stroke-width="1.1" />
<line x1="1" y1="15" x2="15.5" y2="1" stroke="#000" stroke-width="1.1" />
<line x1="1" y1="15" x2="15.5" y2="7" stroke="#ff0000" stroke-width="1.1" />
<line x1="1" y1="15" x2="15.5" y2="10.5" stroke="#c00000" stroke-width="1.1" />
<rect x="0" y="13" width="3" height="3" fill="#c00000" />
</g>
<g transform="translate(504,107)">
<rect x="1.5" y="2.5" width="13" height="13" fill="none" stroke="#000" stroke-width="1.3"/>
<line x1="1.5" y1="15.5" x2="6" y2="0" stroke="#9000a0" stroke-width="1" />
<line x1="1.5" y1="15.5" x2="11" y2="1" stroke="#ff0000" stroke-width="1" />
<line x1="1.5" y1="15.5" x2="15.5" y2="1.5" stroke="#ff0000" stroke-width="1" />
<line x1="1.5" y1="15.5" x2="16" y2="6" stroke="#9000a0" stroke-width="1" />
<line x1="1.5" y1="15.5" x2="16" y2="10" stroke="#ff0000" stroke-width="1" />
<line x1="1.5" y1="15.5" x2="12" y2="5" stroke="#000" stroke-width="1" />
</g>
<g transform="translate(527,107)">
<rect x="1.5" y="0.5" width="13" height="13" fill="none" stroke="#000" stroke-width="1.3"/>
<line x1="1.5" y1="0.5" x2="5" y2="16" stroke="#9000a0" stroke-width="1" />
<line x1="1.5" y1="0.5" x2="10" y2="15" stroke="#ff0000" stroke-width="1" />
<line x1="1.5" y1="0.5" x2="16" y2="16" stroke="#ff0000" stroke-width="1" />
<line x1="1.5" y1="0.5" x2="16" y2="10" stroke="#9000a0" stroke-width="1" />
<line x1="1.5" y1="0.5" x2="16" y2="6" stroke="#9000a0" stroke-width="1" />
<line x1="1.5" y1="0.5" x2="13" y2="12" stroke="#000" stroke-width="1" />
</g>
<g transform="translate(550,107)">
<line x1="0.5" y1="15.5" x2="16" y2="0" stroke="#000" stroke-width="1" />
<line x1="0.5" y1="15.5" x2="16" y2="7" stroke="#000" stroke-width="1" />
<line x1="0.5" y1="15.5" x2="16" y2="10.5" stroke="#000" stroke-width="1" />
<polygon points="0,16 4,12.5 5,14.5" fill="#000" stroke="none" stroke-width="1" />
</g>
<g transform="translate(573,107)">
<polyline points="0.5,1.5 7,14 11.5,5 15.5,10" stroke="#000" stroke-width="1" fill="none" />
<line x1="0" y1="15.5" x2="16" y2="15.5" stroke="#606060" stroke-width="1" stroke-dasharray="1 1"/>
</g>
<g transform="translate(596,107)" class="c">
<rect x="0" y="0" width="16" height="1" fill="#909090" />
<rect x="0" y="0" width="1" height="16" fill="#909090" />
<rect x="0" y="3" width="16" height="1" fill="#909090" />
<rect x="3" y="0" width="1" height="16" fill="#909090" />
<rect x="0" y="6" width="16" height="1" fill="#909090" />
<rect x="6" y="0" width="1" height="16" fill="#909090" />
<rect x="0" y="9" width="16" height="1" fill="#909090" />
<rect x="9" y="0" width="1" height="16" fill="#909090" />
<rect x="0" y="12" width="16" height="1" fill="#909090" />
<rect x="12" y="0" width="1" height="16" fill="#909090" />
<rect x="0" y="15" width="16" height="1" fill="#909090" />
<rect x="15" y="0" width="1" height="16" fill="#909090" />
<rect x="1" y="1" width="1" height="1" fill="#ff0000" />
<rect x="1" y="7" width="1" height="1" fill="#ff0000" />
<rect x="1" y="13" width="1" height="1" fill="#ff0000" />
<rect x="4" y="4" width="1" height="1" fill="#ff0000" />
<rect x="4" y="10" width="1" height="1" fill="#ff0000" />
<rect x="7" y="1" width="1" height="1" fill="#ff0000" />
<rect x="7" y="7" width="1" height="1" fill="#ff0000" />
<rect x="7" y="13" width="1" height="1" fill="#ff0000" />
<rect x="10" y="4" width="1" height="1" fill="#ff0000" />
<rect x="10" y="10" width="1" height="1" fill="#ff0000" />
<rect x="13" y="1" width="1" height="1" fill="#ff0000" />
<rect x="13" y="7" width="1" height="1" fill="#ff0000" />
<rect x="13" y="13" width="1" height="1" fill="#ff0000" />
<rect x="6" y="6" width="3" height="3" fill="#ff6060" />
</g>
<g transform="translate(619,107)" class="c">
<rect x="0" y="0" width="16" height="1" fill="#909090" />
<rect x="0" y="0" width="1" height="16" fill="#909090" />
<rect x="0" y="3" width="16" height="1" fill="#909090" />
<rect x="3" y="0" width="1" height="16" fill="#909090" />
<rect x="0" y="6" width="16" height="1" fill="#909090" />
<rect x="6" y="0" width="1" height="16" fill="#909090" />
<rect x="0" y="9" width="16" height="1" fill="#909090" />
<rect x="9" y="0" width="1" height="16" fill="#909090" />
<rect x="0" y="12" width="16" height="1" fill="#909090" />
<rect x="12" y="0" width="1" height="16" fill="#909090" />
<rect x="0" y="15" width="16" height="1" fill="#909090" />
<rect x="15" y="0" width="1" height="16" fill="#909090" />
<rect x="1" y="1" width="1" height="1" fill="#ff0000" />
<rect x="1" y="7" width="1" height="1" fill="#ff0000" />
<rect x="1" y="13" width="1" height="1" fill="#ff0000" />
<rect x="4" y="4" width="1" height="1" fill="#ff0000" />
<rect x="4" y="10" width="1" height="1" fill="#ff0000" />
<rect x="7" y="1" width="1" height="1" fill="#ff0000" />
<rect x="7" y="7" width="1" height="1" fill="#ff0000" />
<rect x="7" y="13" width="1" height="1" fill="#ff0000" />
<rect x="10" y="4" width="1" height="1" fill="#ff0000" />
<rect x="10" y="10" width="1" height="1" fill="#ff0000" />
<rect x="13" y="1" width="1" height="1" fill="#ff0000" />
<rect x="13" y="7" width="1" height="1" fill="#ff0000" />
<rect x="13" y="13" width="1" height="1" fill="#ff0000" />
<rect x="6" y="6" width="3" height="3" fill="#ff6060" />
</g>
<g transform="translate(619,107)" class="c">
<rect x="0" y="0" width="1" height="16" fill="#000" />
<rect x="0" y="15" width="16" height="1" fill="#000" />
</g>
<g transform="translate(619,107)">
<polygon points="0.5,-1 -1.5,2.5 2.5,2.5" fill="#000" stroke="none" stroke-width="1" />
<polygon points="16.5,15.5 13,13.5 13,17.5" fill="#000" stroke="none" stroke-width="1" />
</g>
<g transform="translate(642,107)">
<line x1="0" y1="9" x2="15" y2="0" stroke="#808080" stroke-width="1" />
<line x1="0" y1="12.5" x2="15" y2="3.5" stroke="#808080" stroke-width="1" />
<line x1="0" y1="16" x2="15" y2="7" stroke="#808080" stroke-width="1" />
<line x1="2.5" y1="3" x2="2.5" y2="16" stroke="#808080" stroke-width="1" />
<line x1="12.5" y1="0" x2="12.5" y2="13" stroke="#808080" stroke-width="1" />
</g>
<g class="c">
<rect x="663" y="104" width="1" height="22" fill="#a0a0a0" />
<rect x="664" y="104" width="1" height="22" fill="#fff" />
</g>
<g class="c">
<rect x="667" y="105" width="2" height="20" fill="#ffffff" />
<rect x="669" y="105" width="1" height="20" fill="#a0a0a0" />
</g>
<g transform="translate(676,107)" class="c">
<rect x="0" y="1" width="1" height="14" fill="#000" />
<rect x="8" y="1" width="1" height="14" fill="#000" />
<rect x="0" y="1" width="9" height="1" fill="#000" />
<rect x="0" y="3" width="8" height="1" fill="#000" />
<rect x="0" y="5" width="9" height="1" fill="#000" />
<rect x="0" y="7" width="8" height="1" fill="#000" />
<rect x="0" y="9" width="9" height="1" fill="#000" />
<rect x="0" y="11" width="8" height="1" fill="#000" />
<rect x="0" y="14" width="15" height="1" fill="#000" />
<rect x="14" y="11" width="1" height="5" fill="#000" />
<rect x="10" y="1" width="4" height="1" fill="#000" />
<rect x="12" y="2" width="2" height="1" fill="#000" />
<rect x="10" y="3" width="4" height="1" fill="#000" />
<rect x="10" y="5" width="4" height="1" fill="#000" />
<rect x="12" y="6" width="2" height="1" fill="#000" />
<rect x="10" y="7" width="4" height="1" fill="#000" />
<rect x="10" y="9" width="4" height="1" fill="#000" />
<rect x="12" y="10" width="2" height="1" fill="#000" />
<rect x="10" y="11" width="4" height="1" fill="#000" />
</g>
<g transform="translate(698,107)">
<line x1="0" y1="0.5" x2="16" y2="0.5" stroke="#ff0000" stroke-width="1.3" />
<line x1="0" y1="15.5" x2="6" y2="15.5" stroke="#ff0000" stroke-width="1.3" />
<line x1="8.5" y1="6.5" x2="16" y2="6.5" stroke="#ff0000" stroke-width="1.3" />
<polyline points="2.5,15 8,1.5 14,5.5 16,2" stroke="#000" stroke-width="1" fill="none" />
</g>
<text x="705" y="122.3" font-size="10.5" fill="#ff0000" stroke="#ff0000" stroke-width="0.35" font-family='"Liberation Sans","Noto Sans CJK SC",sans-serif' textLength="9.5" lengthAdjust="spacingAndGlyphs">%</text>
<text x="722.5" y="121.2" font-size="17" fill="#000" font-family='"Liberation Sans","Noto Sans CJK SC",sans-serif' textLength="13" lengthAdjust="spacingAndGlyphs">%</text>
<g transform="translate(744,107)" class="c">
<rect x="0" y="0" width="16" height="1" fill="#000" />
<rect x="0" y="15" width="16" height="1" fill="#000" />
<rect x="8" y="3" width="8" height="1" fill="#000" />
<rect x="9" y="8" width="7" height="1" fill="#000" />
<rect x="0" y="0" width="16" height="1" fill="#000" />
<rect x="0" y="15" width="16" height="1" fill="#000" />
</g>
<text x="743.5" y="121" font-size="11" fill="#ff0000" stroke="#ff0000" stroke-width="0.35" font-family='"Liberation Sans","Noto Sans CJK SC",sans-serif' textLength="9.5" lengthAdjust="spacingAndGlyphs">%</text>
<g transform="translate(767,107)">
<circle cx="8" cy="8.5" r="7.3" stroke="#909090" fill="#f4f4f4" stroke-width="1"/>
</g>
<text x="775" y="120" font-size="12" fill="#808000" font-family='"Liberation Sans","Noto Sans CJK SC",sans-serif' font-weight="400" text-anchor="middle" >金</text>
<g transform="translate(790,107)" class="c">
<rect x="0" y="0" width="16" height="1" fill="#000" />
<rect x="7" y="3" width="9" height="1" fill="#000" />
<rect x="9" y="9" width="7" height="1" fill="#000" />
<rect x="0" y="15" width="16" height="1" fill="#000" />
<rect x="0" y="14" width="9" height="1" fill="#808000" />
</g>
<text x="794.5" y="120.5" font-size="10.5" fill="#808000" font-family='"Liberation Sans","Noto Sans CJK SC",sans-serif' font-weight="400" text-anchor="middle" >金</text>
<g transform="translate(813,107)" class="c">
<rect x="2" y="0" width="1" height="16" fill="#000" />
<rect x="0" y="2" width="5" height="1" fill="#000" />
<rect x="0" y="5" width="5" height="1" fill="#000" />
<rect x="0" y="7" width="5" height="1" fill="#000" />
<rect x="0" y="9" width="5" height="1" fill="#000" />
<rect x="0" y="15" width="6" height="1" fill="#000" />
</g>
<g transform="translate(818.5,108) scale(0.72,0.9)">
<g transform="translate(0,0)">
<polygon points="8.8,1.5 15,6.8 9.2,12.3 4.6,10.6" fill="#a4a4a4" stroke="#000" stroke-width="1" />
<polygon points="8.8,1.5 10.5,0 15.3,0.3 15.4,7.2 15,6.8" fill="#ff0000" stroke="#ff0000" stroke-width="0.6" />
<polygon points="4.6,10.6 9.2,12.3 6,13.6 4,12.6" fill="#ff0000" stroke="none" stroke-width="1" />
<polygon points="7.5,6 10,3.8 12.5,6 10,9.5" fill="#d0d0d0" stroke="none" stroke-width="1" />
<polyline points="0.2,12 3.2,15.4 7.5,13" stroke="#000" stroke-width="1.2" fill="none" />
</g>
</g>
<g transform="translate(836,107)" class="c">
<rect x="0" y="0" width="16" height="1" fill="#ff0000" />
<rect x="0" y="15" width="16" height="1" fill="#ff0000" />
<rect x="0" y="7" width="16" height="1" fill="#000" />
</g>
<g transform="translate(836,107)">
<path d="M0.5,14 Q2.5,8 4.5,2.5 Q6,1 7,6 L9,13.5 Q10,15.5 11.5,12 L15.5,2.5" stroke="#808080" stroke-width="1" fill="none" />
</g>
<g transform="translate(859,107)" class="c">
<rect x="0" y="0" width="16" height="1" fill="#ff0000" />
<rect x="0" y="15" width="16" height="1" fill="#ff0000" />
</g>
<text x="867" y="120" font-size="12" fill="#808000" font-family='"Liberation Sans","Noto Sans CJK SC",sans-serif' font-weight="400" text-anchor="middle" >金</text>
<g transform="translate(882,107)">
<line x1="0" y1="15" x2="15.5" y2="0" stroke="#000" stroke-width="1" />
</g>
<g transform="translate(882,107)" class="c">
<rect x="7" y="7" width="9" height="1" fill="#000" />
<rect x="4" y="11" width="12" height="1" fill="#000" />
<rect x="0" y="14" width="16" height="1" fill="#000" />
</g>
<text x="884.5" y="115.5" font-size="11" fill="#ff0000" font-family='"Liberation Sans","Noto Sans CJK SC",sans-serif' font-weight="normal" text-anchor="middle" stroke="#ff0000" stroke-width="0.25">J</text>
<g transform="translate(905,107)">
<line x1="0" y1="15" x2="15.5" y2="0" stroke="#000" stroke-width="1" />
</g>
<g transform="translate(905,107)" class="c">
<rect x="7" y="7" width="9" height="1" fill="#000" />
<rect x="4" y="11" width="12" height="1" fill="#000" />
<rect x="0" y="14" width="16" height="1" fill="#000" />
</g>
<text x="908.5" y="116.5" font-size="13" fill="#ff0000" font-family='"Liberation Sans","Noto Sans CJK SC",sans-serif' font-weight="bold" text-anchor="middle" stroke="#ff0000" stroke-width="0.25">F</text>
<g transform="translate(928,107)">
<line x1="0" y1="15" x2="15.5" y2="0" stroke="#000" stroke-width="1" />
</g>
<g transform="translate(928,107)" class="c">
<rect x="7" y="7" width="9" height="1" fill="#000" />
<rect x="4" y="11" width="12" height="1" fill="#000" />
<rect x="0" y="14" width="16" height="1" fill="#000" />
</g>
<text x="932.5" y="116.5" font-size="10.5" fill="#808000" font-family='"Liberation Sans","Noto Sans CJK SC",sans-serif' font-weight="400" text-anchor="middle" stroke="#808000" stroke-width="0.25">金</text>
<g transform="translate(951,107)">
<line x1="0" y1="15" x2="15.5" y2="0" stroke="#000" stroke-width="1" />
</g>
<g transform="translate(951,107)" class="c">
<rect x="7" y="7" width="9" height="1" fill="#000" />
<rect x="4" y="11" width="12" height="1" fill="#000" />
<rect x="0" y="14" width="16" height="1" fill="#000" />
</g>
<text x="956.2" y="117" font-size="11.5" fill="#ff0000" font-family='"Liberation Sans","Noto Sans CJK SC",sans-serif' font-weight="400" text-anchor="middle" stroke="#ff0000" stroke-width="0.25">神</text>
<g transform="translate(974,107)">
<line x1="0" y1="15" x2="15.5" y2="0" stroke="#000" stroke-width="1" />
</g>
<g transform="translate(974,107)" class="c">
<rect x="7" y="7" width="9" height="1" fill="#000" />
<rect x="4" y="11" width="12" height="1" fill="#000" />
<rect x="0" y="14" width="16" height="1" fill="#000" />
</g>
<text x="979.7" y="117.5" font-size="12" fill="#ff0000" font-family='"Liberation Sans","Noto Sans CJK SC",sans-serif' font-weight="400" text-anchor="middle" stroke="#ff0000" stroke-width="0.25">赢</text>
<g transform="translate(997,107)">
<line x1="0" y1="15" x2="15.5" y2="0" stroke="#000" stroke-width="1" />
</g>
<g transform="translate(997,107)" class="c">
<rect x="7" y="7" width="9" height="1" fill="#000" />
<rect x="4" y="11" width="12" height="1" fill="#000" />
<rect x="0" y="14" width="16" height="1" fill="#000" />
</g>
<text x="1001.8" y="116.3" font-size="10.5" fill="#ff0000" font-family='"Liberation Sans","Noto Sans CJK SC",sans-serif' font-weight="400" text-anchor="middle" stroke="#ff0000" stroke-width="0.25">四</text>
<g class="c">
<rect x="70" y="140" width="1170" height="1" fill="#a0a0a0" />
</g>
<text x="70.5" y="137.8" font-size="9" fill="#a0a0a0" font-family='"Liberation Sans","Noto Sans CJK SC",sans-serif' font-weight="normal" text-anchor="start" textLength="22.5" lengthAdjust="spacing" >06-25</text>
<text x="123.8" y="137.8" font-size="9" fill="#a0a0a0" font-family='"Liberation Sans","Noto Sans CJK SC",sans-serif' font-weight="normal" text-anchor="start" textLength="22.5" lengthAdjust="spacing" >07-15</text>
<text x="189.1" y="137.8" font-size="9" fill="#a0a0a0" font-family='"Liberation Sans","Noto Sans CJK SC",sans-serif' font-weight="normal" text-anchor="start" textLength="22.5" lengthAdjust="spacing" >08-02</text>
<text x="254.4" y="137.8" font-size="9" fill="#a0a0a0" font-family='"Liberation Sans","Noto Sans CJK SC",sans-serif' font-weight="normal" text-anchor="start" textLength="22.5" lengthAdjust="spacing" >08-22</text>
<text x="319.7" y="137.8" font-size="9" fill="#a0a0a0" font-family='"Liberation Sans","Noto Sans CJK SC",sans-serif' font-weight="normal" text-anchor="start" textLength="22.5" lengthAdjust="spacing" >09-11</text>
<text x="385.0" y="137.8" font-size="9" fill="#a0a0a0" font-family='"Liberation Sans","Noto Sans CJK SC",sans-serif' font-weight="normal" text-anchor="start" textLength="22.5" lengthAdjust="spacing" >10-10</text>
<text x="450.3" y="137.8" font-size="9" fill="#a0a0a0" font-family='"Liberation Sans","Noto Sans CJK SC",sans-serif' font-weight="normal" text-anchor="start" textLength="22.5" lengthAdjust="spacing" >10-30</text>
<text x="515.6" y="137.8" font-size="9" fill="#a0a0a0" font-family='"Liberation Sans","Noto Sans CJK SC",sans-serif' font-weight="normal" text-anchor="start" textLength="22.5" lengthAdjust="spacing" >11-19</text>
<text x="580.9" y="137.8" font-size="9" fill="#a0a0a0" font-family='"Liberation Sans","Noto Sans CJK SC",sans-serif' font-weight="normal" text-anchor="start" textLength="22.5" lengthAdjust="spacing" >12-09</text>
<text x="646.2" y="137.8" font-size="9" fill="#a0a0a0" font-family='"Liberation Sans","Noto Sans CJK SC",sans-serif' font-weight="normal" text-anchor="start" textLength="22.5" lengthAdjust="spacing" >12-27</text>
<text x="711.5" y="137.8" font-size="9" fill="#a0a0a0" font-family='"Liberation Sans","Noto Sans CJK SC",sans-serif' font-weight="normal" text-anchor="start" textLength="22.5" lengthAdjust="spacing" >01-17</text>
<text x="776.8" y="137.8" font-size="9" fill="#a0a0a0" font-family='"Liberation Sans","Noto Sans CJK SC",sans-serif' font-weight="normal" text-anchor="start" textLength="22.5" lengthAdjust="spacing" >02-13</text>
<text x="842.1" y="137.8" font-size="9" fill="#a0a0a0" font-family='"Liberation Sans","Noto Sans CJK SC",sans-serif' font-weight="normal" text-anchor="start" textLength="22.5" lengthAdjust="spacing" >03-05</text>
<text x="907.4" y="137.8" font-size="9" fill="#a0a0a0" font-family='"Liberation Sans","Noto Sans CJK SC",sans-serif' font-weight="normal" text-anchor="start" textLength="22.5" lengthAdjust="spacing" >03-25</text>
<text x="972.7" y="137.8" font-size="9" fill="#a0a0a0" font-family='"Liberation Sans","Noto Sans CJK SC",sans-serif' font-weight="normal" text-anchor="start" textLength="22.5" lengthAdjust="spacing" >04-15</text>
<text x="1038.0" y="137.8" font-size="9" fill="#a0a0a0" font-family='"Liberation Sans","Noto Sans CJK SC",sans-serif' font-weight="normal" text-anchor="start" textLength="22.5" lengthAdjust="spacing" >05-05</text>
<text x="1103.3" y="137.8" font-size="9" fill="#a0a0a0" font-family='"Liberation Sans","Noto Sans CJK SC",sans-serif' font-weight="normal" text-anchor="start" textLength="22.5" lengthAdjust="spacing" >05-23</text>
<text x="2.5" y="145" font-size="12" fill="#0000ff" font-family='"Liberation Serif","Noto Serif CJK SC",serif' font-weight="normal" text-anchor="start" textLength="31" lengthAdjust="spacing" >日K线</text>
<text x="1139.5" y="153" font-size="13" fill="#0000ff" font-family='"Liberation Serif","Noto Serif CJK SC",serif' font-weight="normal" text-anchor="start" textLength="103" lengthAdjust="spacing" >1A0001 上证指数</text>
<g class="c">
<rect x="72" y="280" width="1088" height="1" fill="#808080" />
<rect x="70" y="277" width="1" height="7" fill="#3060ff" opacity="0.55"/>
<rect x="71" y="279" width="1" height="2" fill="#3060ff" opacity="0.5"/>
<rect x="72" y="295" width="1095" height="1" fill="#000080" />
<rect x="70" y="292" width="1" height="7" fill="#3060ff" opacity="0.55"/>
<rect x="71" y="294" width="1" height="2" fill="#3060ff" opacity="0.5"/>
<rect x="72" y="341" width="1095" height="1" fill="#800080" />
<rect x="70" y="338" width="1" height="7" fill="#800080" opacity="0.55"/>
<rect x="71" y="340" width="1" height="2" fill="#800080" opacity="0.5"/>
<rect x="72" y="387" width="1095" height="1" fill="#008080" />
<rect x="70" y="384" width="1" height="7" fill="#008080" opacity="0.55"/>
<rect x="71" y="386" width="1" height="2" fill="#008080" opacity="0.5"/>
<rect x="72" y="402" width="1088" height="1" fill="#0000ff" />
<rect x="70" y="399" width="1" height="7" fill="#0000ff" opacity="0.55"/>
<rect x="71" y="401" width="1" height="2" fill="#0000ff" opacity="0.5"/>
<rect x="431" y="158" width="1" height="367" fill="#0000ff" />
<rect x="459" y="158" width="1" height="367" fill="#008080" />
<rect x="488" y="158" width="1" height="367" fill="#800080" />
<rect x="581" y="158" width="1" height="367" fill="#ff0000" />
<rect x="673" y="158" width="1" height="367" fill="#0000ff" />
<rect x="702" y="158" width="1" height="367" fill="#008080" />
<rect x="731" y="158" width="1" height="367" fill="#800080" />
<rect x="823" y="158" width="1" height="367" fill="#ff0000" />
<rect x="916" y="158" width="1" height="367" fill="#0000ff" />
<rect x="945" y="158" width="1" height="367" fill="#008080" />
<rect x="973" y="158" width="1" height="367" fill="#800080" />
<rect x="1066" y="158" width="1" height="367" fill="#ff0000" />
<rect x="1159" y="158" width="1" height="367" fill="#0000ff" />
<rect x="1187" y="158" width="1" height="367" fill="#008080" />
<rect x="1216" y="158" width="1" height="367" fill="#800080" />
<rect x="338" y="158" width="1" height="367" fill="#ff0000" />
<rect x="70" y="158" width="1090" height="1" fill="#ff0000" />
<rect x="70" y="156" width="1" height="7" fill="#ff0040" />
<rect x="72" y="524" width="1116" height="1" fill="#ff0000" />
<rect x="338" y="225" width="244" height="1" fill="#ff0000" />
</g>
<line x1="72.5" y1="524.5" x2="338.5" y2="158.5" stroke="#ff0000" stroke-width="1" class="c"/>
<line x1="1188" y1="524.5" x2="1239" y2="524.5" stroke="#a0a0a0" stroke-width="1" stroke-dasharray="3 3" class="c"/>
<text x="582.5" y="168" font-size="12" fill="#ff0000" font-family='"Liberation Serif","Noto Serif CJK SC",serif' font-weight="normal" text-anchor="start" textLength="5.5" lengthAdjust="spacing" stroke="#ff0000" stroke-width="0.2">1</text>
<text x="582.5" y="479" font-size="12" fill="#ff0000" font-family='"Liberation Serif","Noto Serif CJK SC",serif' font-weight="normal" text-anchor="start" textLength="11.5" lengthAdjust="spacing" stroke="#ff0000" stroke-width="0.2">52</text>
<text x="674.5" y="178" font-size="12" fill="#0000ff" font-family='"Liberation Serif","Noto Serif CJK SC",serif' font-weight="normal" text-anchor="start" textLength="29.5" lengthAdjust="spacing" stroke="#0000ff" stroke-width="0.2">1.382</text>
<text x="674.5" y="479" font-size="12" fill="#0000ff" font-family='"Liberation Serif","Noto Serif CJK SC",serif' font-weight="normal" text-anchor="start" textLength="11.5" lengthAdjust="spacing" stroke="#0000ff" stroke-width="0.2">72</text>
<text x="703.5" y="178" font-size="12" fill="#008080" font-family='"Liberation Serif","Noto Serif CJK SC",serif' font-weight="normal" text-anchor="start" textLength="17.5" lengthAdjust="spacing" stroke="#008080" stroke-width="0.2">1.5</text>
<text x="703.5" y="479" font-size="12" fill="#008080" font-family='"Liberation Serif","Noto Serif CJK SC",serif' font-weight="normal" text-anchor="start" textLength="11.5" lengthAdjust="spacing" stroke="#008080" stroke-width="0.2">78</text>
<text x="732.5" y="178" font-size="12" fill="#800080" font-family='"Liberation Serif","Noto Serif CJK SC",serif' font-weight="normal" text-anchor="start" textLength="29.5" lengthAdjust="spacing" stroke="#800080" stroke-width="0.2">1.618</text>
<text x="732.5" y="479" font-size="12" fill="#800080" font-family='"Liberation Serif","Noto Serif CJK SC",serif' font-weight="normal" text-anchor="start" textLength="11.5" lengthAdjust="spacing" stroke="#800080" stroke-width="0.2">84</text>
<text x="824.5" y="178" font-size="12" fill="#ff0000" font-family='"Liberation Serif","Noto Serif CJK SC",serif' font-weight="normal" text-anchor="start" textLength="5.5" lengthAdjust="spacing" stroke="#ff0000" stroke-width="0.2">2</text>
<text x="824.5" y="479" font-size="12" fill="#ff0000" font-family='"Liberation Serif","Noto Serif CJK SC",serif' font-weight="normal" text-anchor="start" textLength="17.5" lengthAdjust="spacing" stroke="#ff0000" stroke-width="0.2">104</text>
<text x="917.5" y="178" font-size="12" fill="#0000ff" font-family='"Liberation Serif","Noto Serif CJK SC",serif' font-weight="normal" text-anchor="start" textLength="29.5" lengthAdjust="spacing" stroke="#0000ff" stroke-width="0.2">2.382</text>
<text x="917.5" y="479" font-size="12" fill="#0000ff" font-family='"Liberation Serif","Noto Serif CJK SC",serif' font-weight="normal" text-anchor="start" textLength="17.5" lengthAdjust="spacing" stroke="#0000ff" stroke-width="0.2">124</text>
<text x="946.5" y="178" font-size="12" fill="#008080" font-family='"Liberation Serif","Noto Serif CJK SC",serif' font-weight="normal" text-anchor="start" textLength="17.5" lengthAdjust="spacing" stroke="#008080" stroke-width="0.2">2.5</text>
<text x="946.5" y="479" font-size="12" fill="#008080" font-family='"Liberation Serif","Noto Serif CJK SC",serif' font-weight="normal" text-anchor="start" textLength="17.5" lengthAdjust="spacing" stroke="#008080" stroke-width="0.2">130</text>
<text x="974.5" y="178" font-size="12" fill="#800080" font-family='"Liberation Serif","Noto Serif CJK SC",serif' font-weight="normal" text-anchor="start" textLength="29.5" lengthAdjust="spacing" stroke="#800080" stroke-width="0.2">2.618</text>
<text x="974.5" y="479" font-size="12" fill="#800080" font-family='"Liberation Serif","Noto Serif CJK SC",serif' font-weight="normal" text-anchor="start" textLength="17.5" lengthAdjust="spacing" stroke="#800080" stroke-width="0.2">136</text>
<text x="1067.5" y="178" font-size="12" fill="#ff0000" font-family='"Liberation Serif","Noto Serif CJK SC",serif' font-weight="normal" text-anchor="start" textLength="5.5" lengthAdjust="spacing" stroke="#ff0000" stroke-width="0.2">3</text>
<text x="1067.5" y="479" font-size="12" fill="#ff0000" font-family='"Liberation Serif","Noto Serif CJK SC",serif' font-weight="normal" text-anchor="start" textLength="17.5" lengthAdjust="spacing" stroke="#ff0000" stroke-width="0.2">156</text>
<text x="1160.5" y="178" font-size="12" fill="#0000ff" font-family='"Liberation Serif","Noto Serif CJK SC",serif' font-weight="normal" text-anchor="start" textLength="29.5" lengthAdjust="spacing" stroke="#0000ff" stroke-width="0.2">3.382</text>
<text x="1160.5" y="479" font-size="12" fill="#0000ff" font-family='"Liberation Serif","Noto Serif CJK SC",serif' font-weight="normal" text-anchor="start" textLength="17.5" lengthAdjust="spacing" stroke="#0000ff" stroke-width="0.2">176</text>
<text x="1188.5" y="178" font-size="12" fill="#008080" font-family='"Liberation Serif","Noto Serif CJK SC",serif' font-weight="normal" text-anchor="start" textLength="17.5" lengthAdjust="spacing" stroke="#008080" stroke-width="0.2">3.5</text>
<text x="1188.5" y="479" font-size="12" fill="#008080" font-family='"Liberation Serif","Noto Serif CJK SC",serif' font-weight="normal" text-anchor="start" textLength="17.5" lengthAdjust="spacing" stroke="#008080" stroke-width="0.2">182</text>
<text x="1217.5" y="178" font-size="12" fill="#800080" font-family='"Liberation Serif","Noto Serif CJK SC",serif' font-weight="normal" text-anchor="start" textLength="29.5" lengthAdjust="spacing" stroke="#800080" stroke-width="0.2">3.618</text>
<text x="1217.5" y="479" font-size="12" fill="#800080" font-family='"Liberation Serif","Noto Serif CJK SC",serif' font-weight="normal" text-anchor="start" textLength="17.5" lengthAdjust="spacing" stroke="#800080" stroke-width="0.2">188</text>
<text x="1160.5" y="284.8" font-size="11" fill="#808080" font-family='"DejaVu Sans","Liberation Sans",sans-serif' font-weight="normal" text-anchor="start" textLength="74" lengthAdjust="spacing" stroke="#808080" stroke-width="0.3">66.67%(240)</text>
<text x="1167.0" y="299.8" font-size="11" fill="#000080" font-family='"DejaVu Sans","Liberation Sans",sans-serif' font-weight="normal" text-anchor="start" textLength="67.5" lengthAdjust="spacing" stroke="#000080" stroke-width="0.3">62.5%(225)</text>
<text x="1167.0" y="345.8" font-size="11" fill="#800080" font-family='"DejaVu Sans","Liberation Sans",sans-serif' font-weight="normal" text-anchor="start" textLength="67.5" lengthAdjust="spacing" stroke="#800080" stroke-width="0.3">50.0%(180)</text>
<text x="1167.0" y="391.8" font-size="11" fill="#008080" font-family='"DejaVu Sans","Liberation Sans",sans-serif' font-weight="normal" text-anchor="start" textLength="67.5" lengthAdjust="spacing" stroke="#008080" stroke-width="0.3">37.5%(135)</text>
<text x="1160.5" y="406.8" font-size="11" fill="#0000ff" font-family='"DejaVu Sans","Liberation Sans",sans-serif' font-weight="normal" text-anchor="start" textLength="74" lengthAdjust="spacing" stroke="#0000ff" stroke-width="0.3">33.33%(120)</text>
<clipPath id="cl100"><rect x="1159" y="159" width="80" height="12"/></clipPath>
<text x="1160.5" y="164.3" font-size="11" fill="#ff0000" font-family='"DejaVu Sans","Liberation Sans",sans-serif' font-weight="normal" text-anchor="start" textLength="74" lengthAdjust="spacing" clip-path="url(#cl100)" stroke="#ff0000" stroke-width="0.4">100.0%(360)</text>
<text x="14" y="522" font-size="12" fill="#404040" font-family='"Liberation Serif","Noto Serif CJK SC",serif' font-weight="normal" text-anchor="start" textLength="53.5" lengthAdjust="spacing" >1849.6500</text>
<text x="92.5" y="521.5" font-size="11" fill="#1010ff" font-family='"DejaVu Sans","Liberation Sans",sans-serif' font-weight="normal" text-anchor="start" textLength="59" lengthAdjust="spacing" >1849.6500</text>
<polyline points="72.5,524 80,522 91.5,519.5" stroke="#0000ff" fill="none" stroke-width="1"/>
<text x="358.3" y="174" font-size="11" fill="#1010ff" font-family='"DejaVu Sans","Liberation Sans",sans-serif' font-weight="normal" text-anchor="start" textLength="59.3" lengthAdjust="spacing" >2270.2700</text>
<polyline points="338.5,158.5 348,160.8 357.8,163.8" stroke="#0000ff" fill="none" stroke-width="1"/>
<line x1="392" y1="158" x2="394" y2="156" stroke="#ff0000" stroke-width="0.8"/>
<line x1="395" y1="158" x2="397" y2="156" stroke="#ff0000" stroke-width="0.8"/>
<line x1="398" y1="158" x2="400" y2="156" stroke="#ff0000" stroke-width="0.8"/>
<line x1="401" y1="158" x2="403" y2="156" stroke="#ff0000" stroke-width="0.8"/>
<g class="c"><rect x="308" y="157" width="10" height="1" fill="#ff0000"/><rect x="320" y="156" width="12" height="1" fill="#ff0000" opacity="0.5"/><rect x="322" y="157" width="2" height="1" fill="#ff0000"/><rect x="327" y="157" width="2" height="1" fill="#ff0000"/></g>
<text x="14" y="546" font-size="12" fill="#404040" font-family='"Liberation Serif","Noto Serif CJK SC",serif' font-weight="normal" text-anchor="start" textLength="53.5" lengthAdjust="spacing" >177708703</text>
<line x1="70" y1="542.5" x2="1239" y2="542.5" stroke="#a0a0a0" stroke-width="1" stroke-dasharray="3 3" class="c"/>
<text x="14" y="562" font-size="12" fill="#404040" font-family='"Liberation Serif","Noto Serif CJK SC",serif' font-weight="normal" text-anchor="start" textLength="53.5" lengthAdjust="spacing" >118472469</text>
<line x1="70" y1="558.5" x2="1239" y2="558.5" stroke="#a0a0a0" stroke-width="1" stroke-dasharray="3 3" class="c"/>
<text x="20" y="578" font-size="12" fill="#404040" font-family='"Liberation Serif","Noto Serif CJK SC",serif' font-weight="normal" text-anchor="start" textLength="47.5" lengthAdjust="spacing" >59236234</text>
<line x1="70" y1="574.5" x2="1239" y2="574.5" stroke="#a0a0a0" stroke-width="1" stroke-dasharray="3 3" class="c"/>
<line x1="1041" y1="370.5" x2="1180" y2="370.5" stroke="#808080" stroke-width="1" stroke-dasharray="8 1.5 3 1.5" class="c"/>
<polygon points="377,155 384,155 380.5,159" fill="#000"/>
<g class="c">
<rect x="72" y="437" width="1" height="88" fill="#ff0000" />
<rect x="72" y="425" width="1" height="3" fill="#ff0000" />
<rect x="70" y="428" width="4" height="1" fill="#ff0000" />
<rect x="70" y="437" width="4" height="1" fill="#ff0000" />
<rect x="70" y="429" width="1" height="8" fill="#ff0000" />
<rect x="73" y="429" width="1" height="8" fill="#ff0000" />
<rect x="77" y="430" width="1" height="30" fill="#008000" />
<rect x="75" y="433" width="4" height="2" fill="#008000" />
<rect x="81" y="411" width="1" height="32" fill="#008000" />
<rect x="79" y="432" width="4" height="5" fill="#008000" />
<rect x="86" y="404" width="1" height="7" fill="#ff0000" />
<rect x="86" y="449" width="1" height="9" fill="#ff0000" />
<rect x="84" y="411" width="4" height="1" fill="#ff0000" />
<rect x="84" y="448" width="4" height="1" fill="#ff0000" />
<rect x="84" y="412" width="1" height="36" fill="#ff0000" />
<rect x="87" y="412" width="1" height="36" fill="#ff0000" />
<rect x="91" y="423" width="1" height="7" fill="#ff0000" />
<rect x="89" y="397" width="4" height="1" fill="#ff0000" />
<rect x="89" y="422" width="4" height="1" fill="#ff0000" />
<rect x="89" y="398" width="1" height="24" fill="#ff0000" />
<rect x="92" y="398" width="1" height="24" fill="#ff0000" />
<rect x="95" y="399" width="1" height="13" fill="#ff0000" />
<rect x="93" y="387" width="4" height="1" fill="#ff0000" />
<rect x="93" y="398" width="4" height="1" fill="#ff0000" />
<rect x="93" y="388" width="1" height="10" fill="#ff0000" />
<rect x="96" y="388" width="1" height="10" fill="#ff0000" />
<rect x="100" y="396" width="1" height="27" fill="#008000" />
<rect x="98" y="396" width="4" height="2" fill="#008000" />
<rect x="105" y="374" width="1" height="14" fill="#ff0000" />
<rect x="105" y="408" width="1" height="8" fill="#ff0000" />
<rect x="103" y="388" width="4" height="1" fill="#ff0000" />
<rect x="103" y="407" width="4" height="1" fill="#ff0000" />
<rect x="103" y="389" width="1" height="18" fill="#ff0000" />
<rect x="106" y="389" width="1" height="18" fill="#ff0000" />
<rect x="109" y="374" width="1" height="17" fill="#ff0000" />
<rect x="114" y="408" width="1" height="26" fill="#008000" />
<rect x="112" y="408" width="4" height="21" fill="#008000" />
<rect x="119" y="420" width="1" height="3" fill="#ff0000" />
<rect x="119" y="434" width="1" height="6" fill="#ff0000" />
<rect x="117" y="423" width="4" height="1" fill="#ff0000" />
<rect x="117" y="433" width="4" height="1" fill="#ff0000" />
<rect x="117" y="424" width="1" height="9" fill="#ff0000" />
<rect x="120" y="424" width="1" height="9" fill="#ff0000" />
<rect x="123" y="385" width="1" height="1" fill="#ff0000" />
<rect x="123" y="426" width="1" height="2" fill="#ff0000" />
<rect x="121" y="386" width="4" height="1" fill="#ff0000" />
<rect x="121" y="425" width="4" height="1" fill="#ff0000" />
<rect x="121" y="387" width="1" height="38" fill="#ff0000" />
<rect x="124" y="387" width="1" height="38" fill="#ff0000" />
<rect x="128" y="312" width="1" height="18" fill="#ff0000" />
<rect x="126" y="330" width="4" height="1" fill="#ff0000" />
<rect x="126" y="383" width="4" height="1" fill="#ff0000" />
<rect x="126" y="331" width="1" height="52" fill="#ff0000" />
<rect x="129" y="331" width="1" height="52" fill="#ff0000" />
<rect x="133" y="329" width="1" height="33" fill="#008000" />
<rect x="131" y="334" width="4" height="25" fill="#008000" />
<rect x="137" y="326" width="1" height="16" fill="#ff0000" />
<rect x="137" y="353" width="1" height="8" fill="#ff0000" />
<rect x="135" y="342" width="4" height="1" fill="#ff0000" />
<rect x="135" y="352" width="4" height="1" fill="#ff0000" />
<rect x="135" y="343" width="1" height="9" fill="#ff0000" />
<rect x="138" y="343" width="1" height="9" fill="#ff0000" />
<rect x="142" y="335" width="1" height="1" fill="#ff0000" />
<rect x="142" y="346" width="1" height="14" fill="#ff0000" />
<rect x="140" y="336" width="4" height="1" fill="#ff0000" />
<rect x="140" y="345" width="4" height="1" fill="#ff0000" />
<rect x="140" y="337" width="1" height="8" fill="#ff0000" />
<rect x="143" y="337" width="1" height="8" fill="#ff0000" />
<rect x="147" y="328" width="1" height="28" fill="#008000" />
<rect x="145" y="340" width="4" height="14" fill="#008000" />
<rect x="151" y="356" width="1" height="22" fill="#008000" />
<rect x="149" y="360" width="4" height="13" fill="#008000" />
<rect x="156" y="364" width="1" height="38" fill="#008000" />
<rect x="154" y="371" width="4" height="29" fill="#008000" />
<rect x="161" y="413" width="1" height="6" fill="#ff0000" />
<rect x="159" y="389" width="4" height="1" fill="#ff0000" />
<rect x="159" y="412" width="4" height="1" fill="#ff0000" />
<rect x="159" y="390" width="1" height="22" fill="#ff0000" />
<rect x="162" y="390" width="1" height="22" fill="#ff0000" />
<rect x="165" y="348" width="1" height="7" fill="#ff0000" />
<rect x="165" y="385" width="1" height="4" fill="#ff0000" />
<rect x="163" y="355" width="4" height="1" fill="#ff0000" />
<rect x="163" y="384" width="4" height="1" fill="#ff0000" />
<rect x="163" y="356" width="1" height="28" fill="#ff0000" />
<rect x="166" y="356" width="1" height="28" fill="#ff0000" />
<rect x="170" y="355" width="1" height="30" fill="#008000" />
<rect x="168" y="362" width="4" height="1" fill="#008000" />
<rect x="175" y="355" width="1" height="24" fill="#008000" />
<rect x="173" y="361" width="4" height="14" fill="#008000" />
<rect x="179" y="375" width="1" height="17" fill="#008000" />
<rect x="177" y="382" width="4" height="1" fill="#008000" />
<rect x="184" y="395" width="1" height="17" fill="#008000" />
<rect x="182" y="395" width="4" height="15" fill="#008000" />
<rect x="189" y="388" width="1" height="14" fill="#ff0000" />
<rect x="189" y="409" width="1" height="14" fill="#ff0000" />
<rect x="187" y="402" width="4" height="1" fill="#ff0000" />
<rect x="187" y="408" width="4" height="1" fill="#ff0000" />
<rect x="187" y="403" width="1" height="5" fill="#ff0000" />
<rect x="190" y="403" width="1" height="5" fill="#ff0000" />
<rect x="193" y="381" width="1" height="23" fill="#008000" />
<rect x="191" y="392" width="4" height="7" fill="#008000" />
<rect x="198" y="367" width="1" height="1" fill="#ff0000" />
<rect x="198" y="392" width="1" height="4" fill="#ff0000" />
<rect x="196" y="368" width="4" height="1" fill="#ff0000" />
<rect x="196" y="391" width="4" height="1" fill="#ff0000" />
<rect x="196" y="369" width="1" height="22" fill="#ff0000" />
<rect x="199" y="369" width="1" height="22" fill="#ff0000" />
<rect x="203" y="353" width="1" height="18" fill="#008000" />
<rect x="201" y="359" width="4" height="9" fill="#008000" />
<rect x="207" y="349" width="1" height="1" fill="#ff0000" />
<rect x="207" y="366" width="1" height="5" fill="#ff0000" />
<rect x="205" y="350" width="4" height="1" fill="#ff0000" />
<rect x="205" y="365" width="4" height="1" fill="#ff0000" />
<rect x="205" y="351" width="1" height="14" fill="#ff0000" />
<rect x="208" y="351" width="1" height="14" fill="#ff0000" />
<rect x="212" y="335" width="1" height="7" fill="#ff0000" />
<rect x="212" y="355" width="1" height="7" fill="#ff0000" />
<rect x="210" y="342" width="4" height="1" fill="#ff0000" />
<rect x="210" y="354" width="4" height="1" fill="#ff0000" />
<rect x="210" y="343" width="1" height="11" fill="#ff0000" />
<rect x="213" y="343" width="1" height="11" fill="#ff0000" />
<rect x="217" y="334" width="1" height="21" fill="#008000" />
<rect x="215" y="344" width="4" height="8" fill="#008000" />
<rect x="221" y="342" width="1" height="12" fill="#ff0000" />
<rect x="221" y="355" width="1" height="6" fill="#ff0000" />
<rect x="219" y="354" width="4" height="1" fill="#ff0000" />
<rect x="226" y="340" width="1" height="27" fill="#008000" />
<rect x="224" y="348" width="4" height="1" fill="#008000" />
<rect x="231" y="343" width="1" height="2" fill="#ff0000" />
<rect x="229" y="305" width="4" height="1" fill="#ff0000" />
<rect x="229" y="342" width="4" height="1" fill="#ff0000" />
<rect x="229" y="306" width="1" height="36" fill="#ff0000" />
<rect x="232" y="306" width="1" height="36" fill="#ff0000" />
<rect x="235" y="300" width="1" height="2" fill="#ff0000" />
<rect x="235" y="305" width="1" height="7" fill="#ff0000" />
<rect x="233" y="302" width="4" height="1" fill="#ff0000" />
<rect x="233" y="304" width="4" height="1" fill="#ff0000" />
<rect x="233" y="303" width="1" height="1" fill="#ff0000" />
<rect x="236" y="303" width="1" height="1" fill="#ff0000" />
<rect x="240" y="296" width="1" height="16" fill="#008000" />
<rect x="238" y="299" width="4" height="7" fill="#008000" />
<rect x="245" y="300" width="1" height="25" fill="#008000" />
<rect x="243" y="307" width="4" height="16" fill="#008000" />
<rect x="249" y="221" width="1" height="119" fill="#008000" />
<rect x="247" y="327" width="4" height="7" fill="#008000" />
<rect x="254" y="314" width="1" height="5" fill="#ff0000" />
<rect x="254" y="345" width="1" height="2" fill="#ff0000" />
<rect x="252" y="319" width="4" height="1" fill="#ff0000" />
<rect x="252" y="344" width="4" height="1" fill="#ff0000" />
<rect x="252" y="320" width="1" height="24" fill="#ff0000" />
<rect x="255" y="320" width="1" height="24" fill="#ff0000" />
<rect x="259" y="308" width="1" height="28" fill="#008000" />
<rect x="257" y="322" width="4" height="8" fill="#008000" />
<rect x="263" y="322" width="1" height="22" fill="#008000" />
<rect x="261" y="328" width="4" height="1" fill="#008000" />
<rect x="268" y="322" width="1" height="17" fill="#008000" />
<rect x="266" y="334" width="4" height="1" fill="#008000" />
<rect x="273" y="324" width="1" height="44" fill="#008000" />
<rect x="271" y="327" width="4" height="16" fill="#008000" />
<rect x="277" y="340" width="1" height="4" fill="#ff0000" />
<rect x="275" y="309" width="4" height="1" fill="#ff0000" />
<rect x="275" y="339" width="4" height="1" fill="#ff0000" />
<rect x="275" y="310" width="1" height="29" fill="#ff0000" />
<rect x="278" y="310" width="1" height="29" fill="#ff0000" />
<rect x="282" y="301" width="1" height="2" fill="#ff0000" />
<rect x="282" y="310" width="1" height="5" fill="#ff0000" />
<rect x="280" y="303" width="4" height="1" fill="#ff0000" />
<rect x="280" y="309" width="4" height="1" fill="#ff0000" />
<rect x="280" y="304" width="1" height="5" fill="#ff0000" />
<rect x="283" y="304" width="1" height="5" fill="#ff0000" />
<rect x="287" y="294" width="1" height="11" fill="#ff0000" />
<rect x="287" y="313" width="1" height="10" fill="#ff0000" />
<rect x="285" y="305" width="4" height="1" fill="#ff0000" />
<rect x="285" y="312" width="4" height="1" fill="#ff0000" />
<rect x="285" y="306" width="1" height="6" fill="#ff0000" />
<rect x="288" y="306" width="1" height="6" fill="#ff0000" />
<rect x="291" y="298" width="1" height="19" fill="#008000" />
<rect x="289" y="299" width="4" height="10" fill="#008000" />
<rect x="296" y="294" width="1" height="14" fill="#ff0000" />
<rect x="296" y="309" width="1" height="7" fill="#ff0000" />
<rect x="294" y="308" width="4" height="1" fill="#ff0000" />
<rect x="301" y="300" width="1" height="25" fill="#008000" />
<rect x="299" y="303" width="4" height="5" fill="#008000" />
<rect x="305" y="306" width="1" height="4" fill="#ff0000" />
<rect x="303" y="286" width="4" height="1" fill="#ff0000" />
<rect x="303" y="305" width="4" height="1" fill="#ff0000" />
<rect x="303" y="287" width="1" height="18" fill="#ff0000" />
<rect x="306" y="287" width="1" height="18" fill="#ff0000" />
<rect x="310" y="277" width="1" height="5" fill="#ff0000" />
<rect x="310" y="287" width="1" height="5" fill="#ff0000" />
<rect x="308" y="282" width="4" height="1" fill="#ff0000" />
<rect x="308" y="286" width="4" height="1" fill="#ff0000" />
<rect x="308" y="283" width="1" height="3" fill="#ff0000" />
<rect x="311" y="283" width="1" height="3" fill="#ff0000" />
<rect x="315" y="283" width="1" height="10" fill="#008000" />
<rect x="313" y="284" width="4" height="3" fill="#008000" />
<rect x="319" y="269" width="1" height="2" fill="#ff0000" />
<rect x="317" y="271" width="4" height="1" fill="#ff0000" />
<rect x="317" y="288" width="4" height="1" fill="#ff0000" />
<rect x="317" y="272" width="1" height="16" fill="#ff0000" />
<rect x="320" y="272" width="1" height="16" fill="#ff0000" />
<rect x="324" y="203" width="1" height="5" fill="#ff0000" />
<rect x="322" y="208" width="4" height="1" fill="#ff0000" />
<rect x="322" y="260" width="4" height="1" fill="#ff0000" />
<rect x="322" y="209" width="1" height="51" fill="#ff0000" />
<rect x="325" y="209" width="1" height="51" fill="#ff0000" />
<rect x="329" y="206" width="1" height="11" fill="#ff0000" />
<rect x="327" y="186" width="4" height="1" fill="#ff0000" />
<rect x="327" y="205" width="4" height="1" fill="#ff0000" />
<rect x="327" y="187" width="1" height="18" fill="#ff0000" />
<rect x="330" y="187" width="1" height="18" fill="#ff0000" />
<rect x="333" y="170" width="1" height="20" fill="#008000" />
<rect x="331" y="180" width="4" height="3" fill="#008000" />
<rect x="338" y="159" width="1" height="12" fill="#ff0000" />
<rect x="336" y="171" width="4" height="1" fill="#ff0000" />
<rect x="336" y="187" width="4" height="1" fill="#ff0000" />
<rect x="336" y="172" width="1" height="15" fill="#ff0000" />
<rect x="339" y="172" width="1" height="15" fill="#ff0000" />
<rect x="343" y="168" width="1" height="26" fill="#008000" />
<rect x="341" y="174" width="4" height="14" fill="#008000" />
<rect x="347" y="177" width="1" height="19" fill="#008000" />
<rect x="345" y="180" width="4" height="12" fill="#008000" />
<rect x="352" y="193" width="1" height="39" fill="#008000" />
<rect x="350" y="193" width="4" height="39" fill="#008000" />
<rect x="357" y="223" width="1" height="3" fill="#ff0000" />
<rect x="357" y="231" width="1" height="12" fill="#ff0000" />
<rect x="355" y="226" width="4" height="1" fill="#ff0000" />
<rect x="355" y="230" width="4" height="1" fill="#ff0000" />
<rect x="355" y="227" width="1" height="3" fill="#ff0000" />
<rect x="358" y="227" width="1" height="3" fill="#ff0000" />
<rect x="361" y="199" width="1" height="2" fill="#ff0000" />
<rect x="359" y="201" width="4" height="1" fill="#ff0000" />
<rect x="359" y="219" width="4" height="1" fill="#ff0000" />
<rect x="359" y="202" width="1" height="17" fill="#ff0000" />
<rect x="362" y="202" width="1" height="17" fill="#ff0000" />
<rect x="366" y="202" width="1" height="28" fill="#008000" />
<rect x="364" y="202" width="4" height="11" fill="#008000" />
<rect x="371" y="205" width="1" height="21" fill="#008000" />
<rect x="369" y="214" width="4" height="6" fill="#008000" />
<rect x="375" y="225" width="1" height="34" fill="#008000" />
<rect x="373" y="225" width="4" height="34" fill="#008000" />
<rect x="380" y="249" width="1" height="5" fill="#ff0000" />
<rect x="378" y="254" width="4" height="1" fill="#ff0000" />
<rect x="378" y="262" width="4" height="1" fill="#ff0000" />
<rect x="378" y="255" width="1" height="7" fill="#ff0000" />
<rect x="381" y="255" width="1" height="7" fill="#ff0000" />
<rect x="385" y="240" width="1" height="1" fill="#ff0000" />
<rect x="385" y="247" width="1" height="3" fill="#ff0000" />
<rect x="383" y="241" width="4" height="1" fill="#ff0000" />
<rect x="383" y="246" width="4" height="1" fill="#ff0000" />
<rect x="383" y="242" width="1" height="4" fill="#ff0000" />
<rect x="386" y="242" width="1" height="4" fill="#ff0000" />
<rect x="389" y="219" width="1" height="2" fill="#ff0000" />
<rect x="389" y="244" width="1" height="9" fill="#ff0000" />
<rect x="387" y="221" width="4" height="1" fill="#ff0000" />
<rect x="387" y="243" width="4" height="1" fill="#ff0000" />
<rect x="387" y="222" width="1" height="21" fill="#ff0000" />
<rect x="390" y="222" width="1" height="21" fill="#ff0000" />
<rect x="394" y="207" width="1" height="2" fill="#ff0000" />
<rect x="394" y="227" width="1" height="6" fill="#ff0000" />
<rect x="392" y="209" width="4" height="1" fill="#ff0000" />
<rect x="392" y="226" width="4" height="1" fill="#ff0000" />
<rect x="392" y="210" width="1" height="16" fill="#ff0000" />
<rect x="395" y="210" width="1" height="16" fill="#ff0000" />
<rect x="399" y="207" width="1" height="24" fill="#008000" />
<rect x="397" y="207" width="4" height="20" fill="#008000" />
<rect x="403" y="194" width="1" height="1" fill="#ff0000" />
<rect x="403" y="218" width="1" height="1" fill="#ff0000" />
<rect x="401" y="195" width="4" height="1" fill="#ff0000" />
<rect x="401" y="217" width="4" height="1" fill="#ff0000" />
<rect x="401" y="196" width="1" height="21" fill="#ff0000" />
<rect x="404" y="196" width="1" height="21" fill="#ff0000" />
<rect x="408" y="182" width="1" height="4" fill="#ff0000" />
<rect x="408" y="191" width="1" height="5" fill="#ff0000" />
<rect x="406" y="186" width="4" height="1" fill="#ff0000" />
<rect x="406" y="190" width="4" height="1" fill="#ff0000" />
<rect x="406" y="187" width="1" height="3" fill="#ff0000" />
<rect x="409" y="187" width="1" height="3" fill="#ff0000" />
<rect x="413" y="185" width="1" height="16" fill="#008000" />
<rect x="411" y="186" width="4" height="4" fill="#008000" />
<rect x="417" y="195" width="1" height="40" fill="#008000" />
<rect x="415" y="195" width="4" height="30" fill="#008000" />
<rect x="422" y="211" width="1" height="24" fill="#008000" />
<rect x="420" y="218" width="4" height="11" fill="#008000" />
<rect x="427" y="216" width="1" height="9" fill="#ff0000" />
<rect x="427" y="229" width="1" height="4" fill="#ff0000" />
<rect x="425" y="225" width="4" height="1" fill="#ff0000" />
<rect x="425" y="228" width="4" height="1" fill="#ff0000" />
<rect x="425" y="226" width="1" height="2" fill="#ff0000" />
<rect x="428" y="226" width="1" height="2" fill="#ff0000" />
<rect x="431" y="221" width="1" height="7" fill="#ff0000" />
<rect x="429" y="194" width="4" height="1" fill="#ff0000" />
<rect x="429" y="220" width="4" height="1" fill="#ff0000" />
<rect x="429" y="195" width="1" height="25" fill="#ff0000" />
<rect x="432" y="195" width="1" height="25" fill="#ff0000" />
<rect x="436" y="195" width="1" height="20" fill="#008000" />
<rect x="434" y="195" width="4" height="15" fill="#008000" />
<rect x="441" y="197" width="1" height="41" fill="#008000" />
<rect x="439" y="208" width="4" height="26" fill="#008000" />
<rect x="445" y="234" width="1" height="20" fill="#008000" />
<rect x="443" y="237" width="4" height="13" fill="#008000" />
<rect x="450" y="246" width="1" height="40" fill="#008000" />
<rect x="448" y="251" width="4" height="26" fill="#008000" />
<rect x="455" y="272" width="1" height="14" fill="#008000" />
<rect x="453" y="275" width="4" height="1" fill="#008000" />
<rect x="459" y="272" width="1" height="40" fill="#008000" />
<rect x="457" y="276" width="4" height="5" fill="#008000" />
<rect x="464" y="252" width="1" height="2" fill="#ff0000" />
<rect x="464" y="283" width="1" height="4" fill="#ff0000" />
<rect x="462" y="254" width="4" height="1" fill="#ff0000" />
<rect x="462" y="282" width="4" height="1" fill="#ff0000" />
<rect x="462" y="255" width="1" height="27" fill="#ff0000" />
<rect x="465" y="255" width="1" height="27" fill="#ff0000" />
<rect x="469" y="258" width="1" height="17" fill="#008000" />
<rect x="467" y="258" width="4" height="12" fill="#008000" />
<rect x="473" y="257" width="1" height="6" fill="#ff0000" />
<rect x="473" y="271" width="1" height="7" fill="#ff0000" />
<rect x="471" y="263" width="4" height="1" fill="#ff0000" />
<rect x="471" y="270" width="4" height="1" fill="#ff0000" />
<rect x="471" y="264" width="1" height="6" fill="#ff0000" />
<rect x="474" y="264" width="1" height="6" fill="#ff0000" />
<rect x="478" y="254" width="1" height="16" fill="#008000" />
<rect x="476" y="257" width="4" height="6" fill="#008000" />
<rect x="483" y="271" width="1" height="14" fill="#ff0000" />
<rect x="481" y="256" width="4" height="1" fill="#ff0000" />
<rect x="481" y="270" width="4" height="1" fill="#ff0000" />
<rect x="481" y="257" width="1" height="13" fill="#ff0000" />
<rect x="484" y="257" width="1" height="13" fill="#ff0000" />
<rect x="487" y="250" width="1" height="22" fill="#008000" />
<rect x="485" y="262" width="4" height="10" fill="#008000" />
<rect x="492" y="271" width="1" height="19" fill="#008000" />
<rect x="490" y="273" width="4" height="8" fill="#008000" />
<rect x="497" y="282" width="1" height="21" fill="#008000" />
<rect x="495" y="287" width="4" height="15" fill="#008000" />
<rect x="501" y="291" width="1" height="7" fill="#ff0000" />
<rect x="501" y="303" width="1" height="9" fill="#ff0000" />
<rect x="499" y="298" width="4" height="1" fill="#ff0000" />
<rect x="499" y="302" width="4" height="1" fill="#ff0000" />
<rect x="499" y="299" width="1" height="3" fill="#ff0000" />
<rect x="502" y="299" width="1" height="3" fill="#ff0000" />
<rect x="506" y="281" width="1" height="2" fill="#ff0000" />
<rect x="506" y="297" width="1" height="2" fill="#ff0000" />
<rect x="504" y="283" width="4" height="1" fill="#ff0000" />
<rect x="504" y="296" width="4" height="1" fill="#ff0000" />
<rect x="504" y="284" width="1" height="12" fill="#ff0000" />
<rect x="507" y="284" width="1" height="12" fill="#ff0000" />
<rect x="511" y="291" width="1" height="27" fill="#008000" />
<rect x="509" y="291" width="4" height="27" fill="#008000" />
<rect x="515" y="303" width="1" height="2" fill="#ff0000" />
<rect x="515" y="317" width="1" height="7" fill="#ff0000" />
<rect x="513" y="305" width="4" height="1" fill="#ff0000" />
<rect x="513" y="316" width="4" height="1" fill="#ff0000" />
<rect x="513" y="306" width="1" height="10" fill="#ff0000" />
<rect x="516" y="306" width="1" height="10" fill="#ff0000" />
<rect x="520" y="260" width="1" height="15" fill="#ff0000" />
<rect x="518" y="275" width="4" height="1" fill="#ff0000" />
<rect x="518" y="304" width="4" height="1" fill="#ff0000" />
<rect x="518" y="276" width="1" height="28" fill="#ff0000" />
<rect x="521" y="276" width="1" height="28" fill="#ff0000" />
<rect x="525" y="221" width="1" height="1" fill="#ff0000" />
<rect x="525" y="265" width="1" height="3" fill="#ff0000" />
<rect x="523" y="222" width="4" height="1" fill="#ff0000" />
<rect x="523" y="264" width="4" height="1" fill="#ff0000" />
<rect x="523" y="223" width="1" height="41" fill="#ff0000" />
<rect x="526" y="223" width="1" height="41" fill="#ff0000" />
<rect x="529" y="217" width="1" height="14" fill="#008000" />
<rect x="527" y="221" width="4" height="4" fill="#008000" />
<rect x="534" y="213" width="1" height="1" fill="#ff0000" />
<rect x="534" y="218" width="1" height="13" fill="#ff0000" />
<rect x="532" y="214" width="4" height="1" fill="#ff0000" />
<rect x="532" y="217" width="4" height="1" fill="#ff0000" />
<rect x="532" y="215" width="1" height="2" fill="#ff0000" />
<rect x="535" y="215" width="1" height="2" fill="#ff0000" />
<rect x="539" y="213" width="1" height="1" fill="#ff0000" />
<rect x="539" y="222" width="1" height="18" fill="#ff0000" />
<rect x="537" y="214" width="4" height="1" fill="#ff0000" />
<rect x="537" y="221" width="4" height="1" fill="#ff0000" />
<rect x="537" y="215" width="1" height="6" fill="#ff0000" />
<rect x="540" y="215" width="1" height="6" fill="#ff0000" />
<rect x="543" y="210" width="1" height="18" fill="#008000" />
<rect x="541" y="213" width="4" height="9" fill="#008000" />
<rect x="548" y="210" width="1" height="21" fill="#ff0000" />
<rect x="548" y="232" width="1" height="3" fill="#ff0000" />
<rect x="546" y="231" width="4" height="1" fill="#ff0000" />
<rect x="553" y="227" width="1" height="13" fill="#008000" />
<rect x="551" y="233" width="4" height="1" fill="#008000" />
<rect x="557" y="213" width="1" height="5" fill="#ff0000" />
<rect x="557" y="235" width="1" height="4" fill="#ff0000" />
<rect x="555" y="218" width="4" height="1" fill="#ff0000" />
<rect x="555" y="234" width="4" height="1" fill="#ff0000" />
<rect x="555" y="219" width="1" height="15" fill="#ff0000" />
<rect x="558" y="219" width="1" height="15" fill="#ff0000" />
<rect x="562" y="188" width="1" height="14" fill="#ff0000" />
<rect x="562" y="215" width="1" height="2" fill="#ff0000" />
<rect x="560" y="202" width="4" height="1" fill="#ff0000" />
<rect x="560" y="214" width="4" height="1" fill="#ff0000" />
<rect x="560" y="203" width="1" height="11" fill="#ff0000" />
<rect x="563" y="203" width="1" height="11" fill="#ff0000" />
<rect x="567" y="198" width="1" height="10" fill="#008000" />
<rect x="565" y="200" width="4" height="1" fill="#008000" />
<rect x="571" y="190" width="1" height="23" fill="#ff0000" />
<rect x="571" y="216" width="1" height="27" fill="#ff0000" />
<rect x="569" y="213" width="4" height="1" fill="#ff0000" />
<rect x="569" y="215" width="4" height="1" fill="#ff0000" />
<rect x="569" y="214" width="1" height="1" fill="#ff0000" />
<rect x="572" y="214" width="1" height="1" fill="#ff0000" />
<rect x="576" y="195" width="1" height="4" fill="#ff0000" />
<rect x="576" y="222" width="1" height="3" fill="#ff0000" />
<rect x="574" y="199" width="4" height="1" fill="#ff0000" />
<rect x="574" y="221" width="4" height="1" fill="#ff0000" />
<rect x="574" y="200" width="1" height="21" fill="#ff0000" />
<rect x="577" y="200" width="1" height="21" fill="#ff0000" />
<rect x="579" y="174" width="4" height="1" fill="#ff0000" />
<rect x="579" y="201" width="4" height="1" fill="#ff0000" />
<rect x="579" y="175" width="1" height="26" fill="#ff0000" />
<rect x="582" y="175" width="1" height="26" fill="#ff0000" />
<rect x="585" y="172" width="1" height="13" fill="#008000" />
<rect x="583" y="173" width="4" height="5" fill="#008000" />
<rect x="590" y="177" width="1" height="17" fill="#008000" />
<rect x="588" y="181" width="4" height="5" fill="#008000" />
<rect x="595" y="176" width="1" height="16" fill="#008000" />
<rect x="593" y="182" width="4" height="4" fill="#008000" />
<rect x="599" y="175" width="1" height="17" fill="#008000" />
<rect x="597" y="183" width="4" height="4" fill="#008000" />
<rect x="604" y="194" width="1" height="31" fill="#008000" />
<rect x="602" y="194" width="4" height="22" fill="#008000" />
<rect x="609" y="206" width="1" height="10" fill="#ff0000" />
<rect x="609" y="220" width="1" height="4" fill="#ff0000" />
<rect x="607" y="216" width="4" height="1" fill="#ff0000" />
<rect x="607" y="219" width="4" height="1" fill="#ff0000" />
<rect x="607" y="217" width="1" height="2" fill="#ff0000" />
<rect x="610" y="217" width="1" height="2" fill="#ff0000" />
<rect x="613" y="215" width="1" height="7" fill="#ff0000" />
<rect x="613" y="229" width="1" height="4" fill="#ff0000" />
<rect x="611" y="222" width="4" height="1" fill="#ff0000" />
<rect x="611" y="228" width="4" height="1" fill="#ff0000" />
<rect x="611" y="223" width="1" height="5" fill="#ff0000" />
<rect x="614" y="223" width="1" height="5" fill="#ff0000" />
<rect x="618" y="218" width="1" height="36" fill="#008000" />
<rect x="616" y="221" width="4" height="32" fill="#008000" />
<rect x="623" y="250" width="1" height="16" fill="#008000" />
<rect x="621" y="252" width="4" height="10" fill="#008000" />
<rect x="627" y="258" width="1" height="12" fill="#008000" />
<rect x="625" y="262" width="4" height="1" fill="#008000" />
<rect x="632" y="256" width="1" height="27" fill="#008000" />
<rect x="630" y="259" width="4" height="23" fill="#008000" />
<rect x="637" y="280" width="1" height="41" fill="#008000" />
<rect x="635" y="280" width="4" height="39" fill="#008000" />
<rect x="641" y="307" width="1" height="8" fill="#ff0000" />
<rect x="641" y="316" width="1" height="18" fill="#ff0000" />
<rect x="639" y="315" width="4" height="1" fill="#ff0000" />
<rect x="646" y="297" width="1" height="27" fill="#008000" />
<rect x="644" y="311" width="4" height="1" fill="#008000" />
<rect x="651" y="299" width="1" height="1" fill="#ff0000" />
<rect x="651" y="310" width="1" height="6" fill="#ff0000" />
<rect x="649" y="300" width="4" height="1" fill="#ff0000" />
<rect x="649" y="309" width="4" height="1" fill="#ff0000" />
<rect x="649" y="301" width="1" height="8" fill="#ff0000" />
<rect x="652" y="301" width="1" height="8" fill="#ff0000" />
<rect x="655" y="303" width="1" height="29" fill="#008000" />
<rect x="653" y="303" width="4" height="28" fill="#008000" />
<rect x="660" y="297" width="1" height="8" fill="#ff0000" />
<rect x="660" y="328" width="1" height="5" fill="#ff0000" />
<rect x="658" y="305" width="4" height="1" fill="#ff0000" />
<rect x="658" y="327" width="4" height="1" fill="#ff0000" />
<rect x="658" y="306" width="1" height="21" fill="#ff0000" />
<rect x="661" y="306" width="1" height="21" fill="#ff0000" />
<rect x="665" y="297" width="1" height="14" fill="#008000" />
<rect x="663" y="298" width="4" height="11" fill="#008000" />
<rect x="669" y="288" width="1" height="4" fill="#ff0000" />
<rect x="669" y="314" width="1" height="3" fill="#ff0000" />
<rect x="667" y="292" width="4" height="1" fill="#ff0000" />
<rect x="667" y="313" width="4" height="1" fill="#ff0000" />
<rect x="667" y="293" width="1" height="20" fill="#ff0000" />
<rect x="670" y="293" width="1" height="20" fill="#ff0000" />
<rect x="674" y="295" width="1" height="11" fill="#008000" />
<rect x="672" y="295" width="4" height="4" fill="#008000" />
<rect x="679" y="304" width="1" height="23" fill="#008000" />
<rect x="677" y="304" width="4" height="17" fill="#008000" />
<rect x="683" y="325" width="1" height="39" fill="#008000" />
<rect x="681" y="325" width="4" height="28" fill="#008000" />
<rect x="688" y="348" width="1" height="4" fill="#ff0000" />
<rect x="688" y="363" width="1" height="6" fill="#ff0000" />
<rect x="686" y="352" width="4" height="1" fill="#ff0000" />
<rect x="686" y="362" width="4" height="1" fill="#ff0000" />
<rect x="686" y="353" width="1" height="9" fill="#ff0000" />
<rect x="689" y="353" width="1" height="9" fill="#ff0000" />
<rect x="693" y="339" width="1" height="22" fill="#008000" />
<rect x="691" y="352" width="4" height="3" fill="#008000" />
<rect x="697" y="344" width="1" height="27" fill="#008000" />
<rect x="695" y="357" width="4" height="13" fill="#008000" />
<rect x="702" y="370" width="1" height="17" fill="#008000" />
<rect x="700" y="373" width="4" height="9" fill="#008000" />
<rect x="707" y="371" width="1" height="22" fill="#008000" />
<rect x="705" y="380" width="4" height="5" fill="#008000" />
<rect x="711" y="368" width="1" height="2" fill="#ff0000" />
<rect x="711" y="387" width="1" height="5" fill="#ff0000" />
<rect x="709" y="370" width="4" height="1" fill="#ff0000" />
<rect x="709" y="386" width="4" height="1" fill="#ff0000" />
<rect x="709" y="371" width="1" height="15" fill="#ff0000" />
<rect x="712" y="371" width="1" height="15" fill="#ff0000" />
<rect x="716" y="370" width="1" height="14" fill="#008000" />
<rect x="714" y="372" width="4" height="1" fill="#008000" />
<rect x="721" y="363" width="1" height="10" fill="#ff0000" />
<rect x="721" y="374" width="1" height="7" fill="#ff0000" />
<rect x="719" y="373" width="4" height="1" fill="#ff0000" />
<rect x="725" y="378" width="1" height="14" fill="#008000" />
<rect x="723" y="378" width="4" height="11" fill="#008000" />
<rect x="730" y="388" width="1" height="18" fill="#008000" />
<rect x="728" y="392" width="4" height="9" fill="#008000" />
<rect x="735" y="381" width="1" height="5" fill="#ff0000" />
<rect x="735" y="400" width="1" height="1" fill="#ff0000" />
<rect x="733" y="386" width="4" height="1" fill="#ff0000" />
<rect x="733" y="399" width="4" height="1" fill="#ff0000" />
<rect x="733" y="387" width="1" height="12" fill="#ff0000" />
<rect x="736" y="387" width="1" height="12" fill="#ff0000" />
<rect x="739" y="384" width="1" height="1" fill="#ff0000" />
<rect x="737" y="348" width="4" height="1" fill="#ff0000" />
<rect x="737" y="383" width="4" height="1" fill="#ff0000" />
<rect x="737" y="349" width="1" height="34" fill="#ff0000" />
<rect x="740" y="349" width="1" height="34" fill="#ff0000" />
<rect x="744" y="348" width="1" height="11" fill="#008000" />
<rect x="742" y="351" width="4" height="5" fill="#008000" />
<rect x="749" y="340" width="1" height="6" fill="#ff0000" />
<rect x="749" y="360" width="1" height="3" fill="#ff0000" />
<rect x="747" y="346" width="4" height="1" fill="#ff0000" />
<rect x="747" y="359" width="4" height="1" fill="#ff0000" />
<rect x="747" y="347" width="1" height="12" fill="#ff0000" />
<rect x="750" y="347" width="1" height="12" fill="#ff0000" />
<rect x="753" y="352" width="1" height="16" fill="#008000" />
<rect x="751" y="355" width="4" height="10" fill="#008000" />
<rect x="758" y="352" width="1" height="8" fill="#ff0000" />
<rect x="758" y="361" width="1" height="10" fill="#ff0000" />
<rect x="756" y="360" width="4" height="1" fill="#ff0000" />
<rect x="763" y="348" width="1" height="2" fill="#ff0000" />
<rect x="763" y="356" width="1" height="3" fill="#ff0000" />
<rect x="761" y="350" width="4" height="1" fill="#ff0000" />
<rect x="761" y="355" width="4" height="1" fill="#ff0000" />
<rect x="761" y="351" width="1" height="4" fill="#ff0000" />
<rect x="764" y="351" width="1" height="4" fill="#ff0000" />
<rect x="767" y="352" width="1" height="15" fill="#008000" />
<rect x="765" y="353" width="4" height="12" fill="#008000" />
<rect x="772" y="374" width="1" height="6" fill="#ff0000" />
<rect x="770" y="354" width="4" height="1" fill="#ff0000" />
<rect x="770" y="373" width="4" height="1" fill="#ff0000" />
<rect x="770" y="355" width="1" height="18" fill="#ff0000" />
<rect x="773" y="355" width="1" height="18" fill="#ff0000" />
<rect x="775" y="318" width="4" height="1" fill="#ff0000" />
<rect x="775" y="349" width="4" height="1" fill="#ff0000" />
<rect x="775" y="319" width="1" height="30" fill="#ff0000" />
<rect x="778" y="319" width="1" height="30" fill="#ff0000" />
<rect x="781" y="297" width="1" height="6" fill="#ff0000" />
<rect x="781" y="318" width="1" height="3" fill="#ff0000" />
<rect x="779" y="303" width="4" height="1" fill="#ff0000" />
<rect x="779" y="317" width="4" height="1" fill="#ff0000" />
<rect x="779" y="304" width="1" height="13" fill="#ff0000" />
<rect x="782" y="304" width="1" height="13" fill="#ff0000" />
<rect x="786" y="303" width="1" height="6" fill="#ff0000" />
<rect x="784" y="297" width="4" height="1" fill="#ff0000" />
<rect x="784" y="302" width="4" height="1" fill="#ff0000" />
<rect x="784" y="298" width="1" height="4" fill="#ff0000" />
<rect x="787" y="298" width="1" height="4" fill="#ff0000" />
<rect x="791" y="287" width="1" height="23" fill="#008000" />
<rect x="789" y="300" width="4" height="8" fill="#008000" />
<rect x="795" y="291" width="1" height="1" fill="#ff0000" />
<rect x="795" y="308" width="1" height="3" fill="#ff0000" />
<rect x="793" y="292" width="4" height="1" fill="#ff0000" />
<rect x="793" y="307" width="4" height="1" fill="#ff0000" />
<rect x="793" y="293" width="1" height="14" fill="#ff0000" />
<rect x="796" y="293" width="1" height="14" fill="#ff0000" />
<rect x="800" y="273" width="1" height="2" fill="#ff0000" />
<rect x="800" y="285" width="1" height="6" fill="#ff0000" />
<rect x="798" y="275" width="4" height="1" fill="#ff0000" />
<rect x="798" y="284" width="4" height="1" fill="#ff0000" />
<rect x="798" y="276" width="1" height="8" fill="#ff0000" />
<rect x="801" y="276" width="1" height="8" fill="#ff0000" />
<rect x="805" y="276" width="1" height="19" fill="#008000" />
<rect x="803" y="276" width="4" height="14" fill="#008000" />
<rect x="809" y="260" width="1" height="9" fill="#ff0000" />
<rect x="809" y="291" width="1" height="5" fill="#ff0000" />
<rect x="807" y="269" width="4" height="1" fill="#ff0000" />
<rect x="807" y="290" width="4" height="1" fill="#ff0000" />
<rect x="807" y="270" width="1" height="20" fill="#ff0000" />
<rect x="810" y="270" width="1" height="20" fill="#ff0000" />
<rect x="814" y="239" width="1" height="35" fill="#008000" />
<rect x="812" y="260" width="4" height="12" fill="#008000" />
<rect x="819" y="279" width="1" height="29" fill="#008000" />
<rect x="817" y="279" width="4" height="15" fill="#008000" />
<rect x="823" y="306" width="1" height="20" fill="#008000" />
<rect x="821" y="306" width="4" height="20" fill="#008000" />
<rect x="828" y="317" width="1" height="53" fill="#008000" />
<rect x="826" y="326" width="4" height="37" fill="#008000" />
<rect x="833" y="370" width="1" height="11" fill="#ff0000" />
<rect x="831" y="357" width="4" height="1" fill="#ff0000" />
<rect x="831" y="369" width="4" height="1" fill="#ff0000" />
<rect x="831" y="358" width="1" height="11" fill="#ff0000" />
<rect x="834" y="358" width="1" height="11" fill="#ff0000" />
<rect x="837" y="334" width="1" height="18" fill="#ff0000" />
<rect x="837" y="353" width="1" height="9" fill="#ff0000" />
<rect x="835" y="352" width="4" height="1" fill="#ff0000" />
<rect x="842" y="342" width="1" height="2" fill="#ff0000" />
<rect x="842" y="358" width="1" height="17" fill="#ff0000" />
<rect x="840" y="344" width="4" height="1" fill="#ff0000" />
<rect x="840" y="357" width="4" height="1" fill="#ff0000" />
<rect x="840" y="345" width="1" height="12" fill="#ff0000" />
<rect x="843" y="345" width="1" height="12" fill="#ff0000" />
<rect x="847" y="325" width="1" height="3" fill="#ff0000" />
<rect x="847" y="348" width="1" height="4" fill="#ff0000" />
<rect x="845" y="328" width="4" height="1" fill="#ff0000" />
<rect x="845" y="347" width="4" height="1" fill="#ff0000" />
<rect x="845" y="329" width="1" height="18" fill="#ff0000" />
<rect x="848" y="329" width="1" height="18" fill="#ff0000" />
<rect x="851" y="329" width="1" height="2" fill="#ff0000" />
<rect x="851" y="334" width="1" height="16" fill="#ff0000" />
<rect x="849" y="331" width="4" height="1" fill="#ff0000" />
<rect x="849" y="333" width="4" height="1" fill="#ff0000" />
<rect x="849" y="332" width="1" height="1" fill="#ff0000" />
<rect x="852" y="332" width="1" height="1" fill="#ff0000" />
<rect x="856" y="329" width="1" height="21" fill="#008000" />
<rect x="854" y="329" width="4" height="19" fill="#008000" />
<rect x="861" y="336" width="1" height="5" fill="#ff0000" />
<rect x="861" y="350" width="1" height="16" fill="#ff0000" />
<rect x="859" y="341" width="4" height="1" fill="#ff0000" />
<rect x="859" y="349" width="4" height="1" fill="#ff0000" />
<rect x="859" y="342" width="1" height="7" fill="#ff0000" />
<rect x="862" y="342" width="1" height="7" fill="#ff0000" />
<rect x="865" y="325" width="1" height="24" fill="#008000" />
<rect x="863" y="342" width="4" height="1" fill="#008000" />
<rect x="870" y="355" width="1" height="42" fill="#008000" />
<rect x="868" y="355" width="4" height="39" fill="#008000" />
<rect x="875" y="385" width="1" height="7" fill="#ff0000" />
<rect x="875" y="398" width="1" height="8" fill="#ff0000" />
<rect x="873" y="392" width="4" height="1" fill="#ff0000" />
<rect x="873" y="397" width="4" height="1" fill="#ff0000" />
<rect x="873" y="393" width="1" height="4" fill="#ff0000" />
<rect x="876" y="393" width="1" height="4" fill="#ff0000" />
<rect x="879" y="384" width="1" height="11" fill="#ff0000" />
<rect x="879" y="396" width="1" height="19" fill="#ff0000" />
<rect x="877" y="395" width="4" height="1" fill="#ff0000" />
<rect x="884" y="368" width="1" height="9" fill="#ff0000" />
<rect x="884" y="393" width="1" height="3" fill="#ff0000" />
<rect x="882" y="377" width="4" height="1" fill="#ff0000" />
<rect x="882" y="392" width="4" height="1" fill="#ff0000" />
<rect x="882" y="378" width="1" height="14" fill="#ff0000" />
<rect x="885" y="378" width="1" height="14" fill="#ff0000" />
<rect x="889" y="378" width="1" height="23" fill="#008000" />
<rect x="887" y="385" width="4" height="4" fill="#008000" />
<rect x="893" y="372" width="1" height="1" fill="#ff0000" />
<rect x="893" y="385" width="1" height="9" fill="#ff0000" />
<rect x="891" y="373" width="4" height="1" fill="#ff0000" />
<rect x="891" y="384" width="4" height="1" fill="#ff0000" />
<rect x="891" y="374" width="1" height="10" fill="#ff0000" />
<rect x="894" y="374" width="1" height="10" fill="#ff0000" />
<rect x="898" y="364" width="1" height="11" fill="#008000" />
<rect x="896" y="370" width="4" height="1" fill="#008000" />
<rect x="903" y="373" width="1" height="2" fill="#ff0000" />
<rect x="903" y="376" width="1" height="16" fill="#ff0000" />
<rect x="901" y="375" width="4" height="1" fill="#ff0000" />
<rect x="907" y="367" width="1" height="32" fill="#008000" />
<rect x="905" y="378" width="4" height="21" fill="#008000" />
<rect x="912" y="348" width="1" height="4" fill="#ff0000" />
<rect x="912" y="404" width="1" height="1" fill="#ff0000" />
<rect x="910" y="352" width="4" height="1" fill="#ff0000" />
<rect x="910" y="403" width="4" height="1" fill="#ff0000" />
<rect x="910" y="353" width="1" height="50" fill="#ff0000" />
<rect x="913" y="353" width="1" height="50" fill="#ff0000" />
<rect x="917" y="329" width="1" height="7" fill="#ff0000" />
<rect x="917" y="349" width="1" height="6" fill="#ff0000" />
<rect x="915" y="336" width="4" height="1" fill="#ff0000" />
<rect x="915" y="348" width="4" height="1" fill="#ff0000" />
<rect x="915" y="337" width="1" height="11" fill="#ff0000" />
<rect x="918" y="337" width="1" height="11" fill="#ff0000" />
<rect x="921" y="324" width="1" height="11" fill="#ff0000" />
<rect x="921" y="339" width="1" height="4" fill="#ff0000" />
<rect x="919" y="335" width="4" height="1" fill="#ff0000" />
<rect x="919" y="338" width="4" height="1" fill="#ff0000" />
<rect x="919" y="336" width="1" height="2" fill="#ff0000" />
<rect x="922" y="336" width="1" height="2" fill="#ff0000" />
<rect x="926" y="329" width="1" height="14" fill="#008000" />
<rect x="924" y="332" width="4" height="6" fill="#008000" />
<rect x="931" y="330" width="1" height="26" fill="#008000" />
<rect x="929" y="340" width="4" height="13" fill="#008000" />
<rect x="935" y="342" width="1" height="21" fill="#008000" />
<rect x="933" y="352" width="4" height="5" fill="#008000" />
<rect x="940" y="352" width="1" height="20" fill="#008000" />
<rect x="938" y="356" width="4" height="9" fill="#008000" />
<rect x="945" y="349" width="1" height="3" fill="#ff0000" />
<rect x="945" y="366" width="1" height="4" fill="#ff0000" />
<rect x="943" y="352" width="4" height="1" fill="#ff0000" />
<rect x="943" y="365" width="4" height="1" fill="#ff0000" />
<rect x="943" y="353" width="1" height="12" fill="#ff0000" />
<rect x="946" y="353" width="1" height="12" fill="#ff0000" />
<rect x="949" y="339" width="1" height="3" fill="#ff0000" />
<rect x="949" y="350" width="1" height="3" fill="#ff0000" />
<rect x="947" y="342" width="4" height="1" fill="#ff0000" />
<rect x="947" y="349" width="4" height="1" fill="#ff0000" />
<rect x="947" y="343" width="1" height="6" fill="#ff0000" />
<rect x="950" y="343" width="1" height="6" fill="#ff0000" />
<rect x="954" y="337" width="1" height="24" fill="#008000" />
<rect x="952" y="338" width="4" height="17" fill="#008000" />
<rect x="959" y="360" width="1" height="3" fill="#ff0000" />
<rect x="957" y="342" width="4" height="1" fill="#ff0000" />
<rect x="957" y="359" width="4" height="1" fill="#ff0000" />
<rect x="957" y="343" width="1" height="16" fill="#ff0000" />
<rect x="960" y="343" width="1" height="16" fill="#ff0000" />
<rect x="963" y="304" width="1" height="4" fill="#ff0000" />
<rect x="963" y="346" width="1" height="2" fill="#ff0000" />
<rect x="961" y="308" width="4" height="1" fill="#ff0000" />
<rect x="961" y="345" width="4" height="1" fill="#ff0000" />
<rect x="961" y="309" width="1" height="36" fill="#ff0000" />
<rect x="964" y="309" width="1" height="36" fill="#ff0000" />
<rect x="968" y="299" width="1" height="3" fill="#ff0000" />
<rect x="968" y="306" width="1" height="4" fill="#ff0000" />
<rect x="966" y="302" width="4" height="1" fill="#ff0000" />
<rect x="966" y="305" width="4" height="1" fill="#ff0000" />
<rect x="966" y="303" width="1" height="2" fill="#ff0000" />
<rect x="969" y="303" width="1" height="2" fill="#ff0000" />
<rect x="973" y="266" width="1" height="10" fill="#ff0000" />
<rect x="973" y="301" width="1" height="8" fill="#ff0000" />
<rect x="971" y="276" width="4" height="1" fill="#ff0000" />
<rect x="971" y="300" width="4" height="1" fill="#ff0000" />
<rect x="971" y="277" width="1" height="23" fill="#ff0000" />
<rect x="974" y="277" width="1" height="23" fill="#ff0000" />
<rect x="977" y="273" width="1" height="7" fill="#ff0000" />
<rect x="977" y="281" width="1" height="8" fill="#ff0000" />
<rect x="975" y="280" width="4" height="1" fill="#ff0000" />
<rect x="982" y="276" width="1" height="3" fill="#ff0000" />
<rect x="982" y="282" width="1" height="9" fill="#ff0000" />
<rect x="980" y="279" width="4" height="1" fill="#ff0000" />
<rect x="980" y="281" width="4" height="1" fill="#ff0000" />
<rect x="980" y="280" width="1" height="1" fill="#ff0000" />
<rect x="983" y="280" width="1" height="1" fill="#ff0000" />
<rect x="987" y="283" width="1" height="25" fill="#008000" />
<rect x="985" y="283" width="4" height="22" fill="#008000" />
<rect x="991" y="295" width="1" height="7" fill="#ff0000" />
<rect x="991" y="309" width="1" height="4" fill="#ff0000" />
<rect x="989" y="302" width="4" height="1" fill="#ff0000" />
<rect x="989" y="308" width="4" height="1" fill="#ff0000" />
<rect x="989" y="303" width="1" height="5" fill="#ff0000" />
<rect x="992" y="303" width="1" height="5" fill="#ff0000" />
<rect x="996" y="298" width="1" height="12" fill="#008000" />
<rect x="994" y="298" width="4" height="9" fill="#008000" />
<rect x="1001" y="306" width="1" height="2" fill="#ff0000" />
<rect x="1001" y="314" width="1" height="9" fill="#ff0000" />
<rect x="999" y="308" width="4" height="1" fill="#ff0000" />
<rect x="999" y="313" width="4" height="1" fill="#ff0000" />
<rect x="999" y="309" width="1" height="4" fill="#ff0000" />
<rect x="1002" y="309" width="1" height="4" fill="#ff0000" />
<rect x="1005" y="303" width="1" height="33" fill="#008000" />
<rect x="1003" y="318" width="4" height="18" fill="#008000" />
<rect x="1010" y="328" width="1" height="2" fill="#ff0000" />
<rect x="1010" y="339" width="1" height="13" fill="#ff0000" />
<rect x="1008" y="330" width="4" height="1" fill="#ff0000" />
<rect x="1008" y="338" width="4" height="1" fill="#ff0000" />
<rect x="1008" y="331" width="1" height="7" fill="#ff0000" />
<rect x="1011" y="331" width="1" height="7" fill="#ff0000" />
<rect x="1015" y="328" width="1" height="14" fill="#008000" />
<rect x="1013" y="334" width="4" height="1" fill="#008000" />
<rect x="1019" y="328" width="1" height="16" fill="#008000" />
<rect x="1017" y="337" width="4" height="7" fill="#008000" />
<rect x="1024" y="337" width="1" height="26" fill="#008000" />
<rect x="1022" y="340" width="4" height="22" fill="#008000" />
<rect x="1029" y="363" width="1" height="30" fill="#008000" />
<rect x="1027" y="363" width="4" height="27" fill="#008000" />
<rect x="1033" y="374" width="1" height="1" fill="#ff0000" />
<rect x="1033" y="392" width="1" height="3" fill="#ff0000" />
<rect x="1031" y="375" width="4" height="1" fill="#ff0000" />
<rect x="1031" y="391" width="4" height="1" fill="#ff0000" />
<rect x="1031" y="376" width="1" height="15" fill="#ff0000" />
<rect x="1034" y="376" width="1" height="15" fill="#ff0000" />
<rect x="1038" y="367" width="1" height="3" fill="#ff0000" />
<rect x="1038" y="375" width="1" height="4" fill="#ff0000" />
<rect x="1036" y="370" width="4" height="1" fill="#ff0000" />
<rect x="1036" y="374" width="4" height="1" fill="#ff0000" />
<rect x="1036" y="371" width="1" height="3" fill="#ff0000" />
<rect x="1039" y="371" width="1" height="3" fill="#ff0000" />
<rect x="70" y="553" width="4" height="1" fill="#ff0000" />
<rect x="70" y="589" width="4" height="1" fill="#ff0000" />
<rect x="70" y="554" width="1" height="35" fill="#ff0000" />
<rect x="73" y="554" width="1" height="35" fill="#ff0000" />
<rect x="75" y="563" width="4" height="27" fill="#008000" />
<rect x="79" y="561" width="4" height="29" fill="#008000" />
<rect x="84" y="563" width="4" height="1" fill="#ff0000" />
<rect x="84" y="589" width="4" height="1" fill="#ff0000" />
<rect x="84" y="564" width="1" height="25" fill="#ff0000" />
<rect x="87" y="564" width="1" height="25" fill="#ff0000" />
<rect x="89" y="569" width="4" height="1" fill="#ff0000" />
<rect x="89" y="589" width="4" height="1" fill="#ff0000" />
<rect x="89" y="570" width="1" height="19" fill="#ff0000" />
<rect x="92" y="570" width="1" height="19" fill="#ff0000" />
<rect x="93" y="567" width="4" height="1" fill="#ff0000" />
<rect x="93" y="589" width="4" height="1" fill="#ff0000" />
<rect x="93" y="568" width="1" height="21" fill="#ff0000" />
<rect x="96" y="568" width="1" height="21" fill="#ff0000" />
<rect x="98" y="565" width="4" height="25" fill="#008000" />
<rect x="103" y="563" width="4" height="1" fill="#ff0000" />
<rect x="103" y="589" width="4" height="1" fill="#ff0000" />
<rect x="103" y="564" width="1" height="25" fill="#ff0000" />
<rect x="106" y="564" width="1" height="25" fill="#ff0000" />
<rect x="107" y="565" width="4" height="1" fill="#ff0000" />
<rect x="107" y="589" width="4" height="1" fill="#ff0000" />
<rect x="107" y="566" width="1" height="23" fill="#ff0000" />
<rect x="110" y="566" width="1" height="23" fill="#ff0000" />
<rect x="112" y="567" width="4" height="23" fill="#008000" />
<rect x="117" y="573" width="4" height="1" fill="#ff0000" />
<rect x="117" y="589" width="4" height="1" fill="#ff0000" />
<rect x="117" y="574" width="1" height="15" fill="#ff0000" />
<rect x="120" y="574" width="1" height="15" fill="#ff0000" />
<rect x="121" y="566" width="4" height="1" fill="#ff0000" />
<rect x="121" y="589" width="4" height="1" fill="#ff0000" />
<rect x="121" y="567" width="1" height="22" fill="#ff0000" />
<rect x="124" y="567" width="1" height="22" fill="#ff0000" />
<rect x="126" y="547" width="4" height="1" fill="#ff0000" />
<rect x="126" y="589" width="4" height="1" fill="#ff0000" />
<rect x="126" y="548" width="1" height="41" fill="#ff0000" />
<rect x="129" y="548" width="1" height="41" fill="#ff0000" />
<rect x="131" y="557" width="4" height="33" fill="#008000" />
<rect x="135" y="563" width="4" height="1" fill="#ff0000" />
<rect x="135" y="589" width="4" height="1" fill="#ff0000" />
<rect x="135" y="564" width="1" height="25" fill="#ff0000" />
<rect x="138" y="564" width="1" height="25" fill="#ff0000" />
<rect x="140" y="564" width="4" height="1" fill="#ff0000" />
<rect x="140" y="589" width="4" height="1" fill="#ff0000" />
<rect x="140" y="565" width="1" height="24" fill="#ff0000" />
<rect x="143" y="565" width="1" height="24" fill="#ff0000" />
<rect x="145" y="562" width="4" height="28" fill="#008000" />
<rect x="149" y="565" width="4" height="25" fill="#008000" />
<rect x="154" y="562" width="4" height="28" fill="#008000" />
<rect x="159" y="568" width="4" height="1" fill="#ff0000" />
<rect x="159" y="589" width="4" height="1" fill="#ff0000" />
<rect x="159" y="569" width="1" height="20" fill="#ff0000" />
<rect x="162" y="569" width="1" height="20" fill="#ff0000" />
<rect x="163" y="560" width="4" height="1" fill="#ff0000" />
<rect x="163" y="589" width="4" height="1" fill="#ff0000" />
<rect x="163" y="561" width="1" height="28" fill="#ff0000" />
<rect x="166" y="561" width="1" height="28" fill="#ff0000" />
<rect x="168" y="561" width="4" height="29" fill="#008000" />
<rect x="173" y="563" width="4" height="27" fill="#008000" />
<rect x="177" y="570" width="4" height="20" fill="#008000" />
<rect x="182" y="578" width="4" height="12" fill="#008000" />
<rect x="187" y="569" width="4" height="1" fill="#ff0000" />
<rect x="187" y="589" width="4" height="1" fill="#ff0000" />
<rect x="187" y="570" width="1" height="19" fill="#ff0000" />
<rect x="190" y="570" width="1" height="19" fill="#ff0000" />
<rect x="191" y="571" width="4" height="19" fill="#008000" />
<rect x="196" y="565" width="4" height="1" fill="#ff0000" />
<rect x="196" y="589" width="4" height="1" fill="#ff0000" />
<rect x="196" y="566" width="1" height="23" fill="#ff0000" />
<rect x="199" y="566" width="1" height="23" fill="#ff0000" />
<rect x="201" y="565" width="4" height="25" fill="#008000" />
<rect x="205" y="567" width="4" height="1" fill="#ff0000" />
<rect x="205" y="589" width="4" height="1" fill="#ff0000" />
<rect x="205" y="568" width="1" height="21" fill="#ff0000" />
<rect x="208" y="568" width="1" height="21" fill="#ff0000" />
<rect x="210" y="561" width="4" height="1" fill="#ff0000" />
<rect x="210" y="589" width="4" height="1" fill="#ff0000" />
<rect x="210" y="562" width="1" height="27" fill="#ff0000" />
<rect x="213" y="562" width="1" height="27" fill="#ff0000" />
<rect x="215" y="561" width="4" height="29" fill="#008000" />
<rect x="219" y="567" width="4" height="1" fill="#ff0000" />
<rect x="219" y="589" width="4" height="1" fill="#ff0000" />
<rect x="219" y="568" width="1" height="21" fill="#ff0000" />
<rect x="222" y="568" width="1" height="21" fill="#ff0000" />
<rect x="224" y="564" width="4" height="26" fill="#008000" />
<rect x="229" y="554" width="4" height="1" fill="#ff0000" />
<rect x="229" y="589" width="4" height="1" fill="#ff0000" />
<rect x="229" y="555" width="1" height="34" fill="#ff0000" />
<rect x="232" y="555" width="1" height="34" fill="#ff0000" />
<rect x="233" y="558" width="4" height="1" fill="#ff0000" />
<rect x="233" y="589" width="4" height="1" fill="#ff0000" />
<rect x="233" y="559" width="1" height="30" fill="#ff0000" />
<rect x="236" y="559" width="1" height="30" fill="#ff0000" />
<rect x="238" y="559" width="4" height="31" fill="#008000" />
<rect x="243" y="563" width="4" height="27" fill="#008000" />
<rect x="247" y="549" width="4" height="41" fill="#008000" />
<rect x="252" y="564" width="4" height="1" fill="#ff0000" />
<rect x="252" y="589" width="4" height="1" fill="#ff0000" />
<rect x="252" y="565" width="1" height="24" fill="#ff0000" />
<rect x="255" y="565" width="1" height="24" fill="#ff0000" />
<rect x="257" y="561" width="4" height="29" fill="#008000" />
<rect x="261" y="566" width="4" height="24" fill="#008000" />
<rect x="266" y="565" width="4" height="25" fill="#008000" />
<rect x="271" y="560" width="4" height="30" fill="#008000" />
<rect x="275" y="558" width="4" height="1" fill="#ff0000" />
<rect x="275" y="589" width="4" height="1" fill="#ff0000" />
<rect x="275" y="559" width="1" height="30" fill="#ff0000" />
<rect x="278" y="559" width="1" height="30" fill="#ff0000" />
<rect x="280" y="556" width="4" height="1" fill="#ff0000" />
<rect x="280" y="589" width="4" height="1" fill="#ff0000" />
<rect x="280" y="557" width="1" height="32" fill="#ff0000" />
<rect x="283" y="557" width="1" height="32" fill="#ff0000" />
<rect x="285" y="546" width="4" height="1" fill="#ff0000" />
<rect x="285" y="589" width="4" height="1" fill="#ff0000" />
<rect x="285" y="547" width="1" height="42" fill="#ff0000" />
<rect x="288" y="547" width="1" height="42" fill="#ff0000" />
<rect x="289" y="554" width="4" height="36" fill="#008000" />
<rect x="294" y="544" width="4" height="1" fill="#ff0000" />
<rect x="294" y="589" width="4" height="1" fill="#ff0000" />
<rect x="294" y="545" width="1" height="44" fill="#ff0000" />
<rect x="297" y="545" width="1" height="44" fill="#ff0000" />
<rect x="299" y="550" width="4" height="40" fill="#008000" />
<rect x="303" y="552" width="4" height="1" fill="#ff0000" />
<rect x="303" y="589" width="4" height="1" fill="#ff0000" />
<rect x="303" y="553" width="1" height="36" fill="#ff0000" />
<rect x="306" y="553" width="1" height="36" fill="#ff0000" />
<rect x="308" y="552" width="4" height="1" fill="#ff0000" />
<rect x="308" y="589" width="4" height="1" fill="#ff0000" />
<rect x="308" y="553" width="1" height="36" fill="#ff0000" />
<rect x="311" y="553" width="1" height="36" fill="#ff0000" />
<rect x="313" y="556" width="4" height="34" fill="#008000" />
<rect x="317" y="551" width="4" height="1" fill="#ff0000" />
<rect x="317" y="589" width="4" height="1" fill="#ff0000" />
<rect x="317" y="552" width="1" height="37" fill="#ff0000" />
<rect x="320" y="552" width="1" height="37" fill="#ff0000" />
<rect x="322" y="531" width="4" height="1" fill="#ff0000" />
<rect x="322" y="589" width="4" height="1" fill="#ff0000" />
<rect x="322" y="532" width="1" height="57" fill="#ff0000" />
<rect x="325" y="532" width="1" height="57" fill="#ff0000" />
<rect x="327" y="526" width="4" height="1" fill="#ff0000" />
<rect x="327" y="589" width="4" height="1" fill="#ff0000" />
<rect x="327" y="527" width="1" height="62" fill="#ff0000" />
<rect x="330" y="527" width="1" height="62" fill="#ff0000" />
<rect x="331" y="524" width="4" height="66" fill="#008000" />
<rect x="336" y="533" width="4" height="1" fill="#ff0000" />
<rect x="336" y="589" width="4" height="1" fill="#ff0000" />
<rect x="336" y="534" width="1" height="55" fill="#ff0000" />
<rect x="339" y="534" width="1" height="55" fill="#ff0000" />
<rect x="341" y="544" width="4" height="46" fill="#008000" />
<rect x="345" y="548" width="4" height="42" fill="#008000" />
<rect x="350" y="548" width="4" height="42" fill="#008000" />
<rect x="355" y="559" width="4" height="1" fill="#ff0000" />
<rect x="355" y="589" width="4" height="1" fill="#ff0000" />
<rect x="355" y="560" width="1" height="29" fill="#ff0000" />
<rect x="358" y="560" width="1" height="29" fill="#ff0000" />
<rect x="359" y="554" width="4" height="1" fill="#ff0000" />
<rect x="359" y="589" width="4" height="1" fill="#ff0000" />
<rect x="359" y="555" width="1" height="34" fill="#ff0000" />
<rect x="362" y="555" width="1" height="34" fill="#ff0000" />
<rect x="364" y="547" width="4" height="43" fill="#008000" />
<rect x="369" y="547" width="4" height="43" fill="#008000" />
<rect x="373" y="552" width="4" height="38" fill="#008000" />
<rect x="378" y="562" width="4" height="1" fill="#ff0000" />
<rect x="378" y="589" width="4" height="1" fill="#ff0000" />
<rect x="378" y="563" width="1" height="26" fill="#ff0000" />
<rect x="381" y="563" width="1" height="26" fill="#ff0000" />
<rect x="383" y="565" width="4" height="1" fill="#ff0000" />
<rect x="383" y="589" width="4" height="1" fill="#ff0000" />
<rect x="383" y="566" width="1" height="23" fill="#ff0000" />
<rect x="386" y="566" width="1" height="23" fill="#ff0000" />
<rect x="387" y="556" width="4" height="1" fill="#ff0000" />
<rect x="387" y="589" width="4" height="1" fill="#ff0000" />
<rect x="387" y="557" width="1" height="32" fill="#ff0000" />
<rect x="390" y="557" width="1" height="32" fill="#ff0000" />
<rect x="392" y="555" width="4" height="1" fill="#ff0000" />
<rect x="392" y="589" width="4" height="1" fill="#ff0000" />
<rect x="392" y="556" width="1" height="33" fill="#ff0000" />
<rect x="395" y="556" width="1" height="33" fill="#ff0000" />
<rect x="397" y="550" width="4" height="40" fill="#008000" />
<rect x="401" y="548" width="4" height="1" fill="#ff0000" />
<rect x="401" y="589" width="4" height="1" fill="#ff0000" />
<rect x="401" y="549" width="1" height="40" fill="#ff0000" />
<rect x="404" y="549" width="1" height="40" fill="#ff0000" />
<rect x="406" y="545" width="4" height="1" fill="#ff0000" />
<rect x="406" y="589" width="4" height="1" fill="#ff0000" />
<rect x="406" y="546" width="1" height="43" fill="#ff0000" />
<rect x="409" y="546" width="1" height="43" fill="#ff0000" />
<rect x="411" y="548" width="4" height="42" fill="#008000" />
<rect x="415" y="548" width="4" height="42" fill="#008000" />
<rect x="420" y="556" width="4" height="34" fill="#008000" />
<rect x="425" y="562" width="4" height="1" fill="#ff0000" />
<rect x="425" y="589" width="4" height="1" fill="#ff0000" />
<rect x="425" y="563" width="1" height="26" fill="#ff0000" />
<rect x="428" y="563" width="1" height="26" fill="#ff0000" />
<rect x="429" y="553" width="4" height="1" fill="#ff0000" />
<rect x="429" y="589" width="4" height="1" fill="#ff0000" />
<rect x="429" y="554" width="1" height="35" fill="#ff0000" />
<rect x="432" y="554" width="1" height="35" fill="#ff0000" />
<rect x="434" y="550" width="4" height="40" fill="#008000" />
<rect x="439" y="550" width="4" height="40" fill="#008000" />
<rect x="443" y="562" width="4" height="28" fill="#008000" />
<rect x="448" y="559" width="4" height="31" fill="#008000" />
<rect x="453" y="566" width="4" height="24" fill="#008000" />
<rect x="457" y="551" width="4" height="39" fill="#008000" />
<rect x="462" y="558" width="4" height="1" fill="#ff0000" />
<rect x="462" y="589" width="4" height="1" fill="#ff0000" />
<rect x="462" y="559" width="1" height="30" fill="#ff0000" />
<rect x="465" y="559" width="1" height="30" fill="#ff0000" />
<rect x="467" y="561" width="4" height="29" fill="#008000" />
<rect x="471" y="566" width="4" height="1" fill="#ff0000" />
<rect x="471" y="589" width="4" height="1" fill="#ff0000" />
<rect x="471" y="567" width="1" height="22" fill="#ff0000" />
<rect x="474" y="567" width="1" height="22" fill="#ff0000" />
<rect x="476" y="569" width="4" height="21" fill="#008000" />
<rect x="481" y="565" width="4" height="1" fill="#ff0000" />
<rect x="481" y="589" width="4" height="1" fill="#ff0000" />
<rect x="481" y="566" width="1" height="23" fill="#ff0000" />
<rect x="484" y="566" width="1" height="23" fill="#ff0000" />
<rect x="485" y="563" width="4" height="27" fill="#008000" />
<rect x="490" y="568" width="4" height="22" fill="#008000" />
<rect x="495" y="568" width="4" height="22" fill="#008000" />
<rect x="499" y="571" width="4" height="1" fill="#ff0000" />
<rect x="499" y="589" width="4" height="1" fill="#ff0000" />
<rect x="499" y="572" width="1" height="17" fill="#ff0000" />
<rect x="502" y="572" width="1" height="17" fill="#ff0000" />
<rect x="504" y="569" width="4" height="1" fill="#ff0000" />
<rect x="504" y="589" width="4" height="1" fill="#ff0000" />
<rect x="504" y="570" width="1" height="19" fill="#ff0000" />
<rect x="507" y="570" width="1" height="19" fill="#ff0000" />
<rect x="509" y="566" width="4" height="24" fill="#008000" />
<rect x="513" y="567" width="4" height="1" fill="#ff0000" />
<rect x="513" y="589" width="4" height="1" fill="#ff0000" />
<rect x="513" y="568" width="1" height="21" fill="#ff0000" />
<rect x="516" y="568" width="1" height="21" fill="#ff0000" />
<rect x="518" y="556" width="4" height="1" fill="#ff0000" />
<rect x="518" y="589" width="4" height="1" fill="#ff0000" />
<rect x="518" y="557" width="1" height="32" fill="#ff0000" />
<rect x="521" y="557" width="1" height="32" fill="#ff0000" />
<rect x="523" y="547" width="4" height="1" fill="#ff0000" />
<rect x="523" y="589" width="4" height="1" fill="#ff0000" />
<rect x="523" y="548" width="1" height="41" fill="#ff0000" />
<rect x="526" y="548" width="1" height="41" fill="#ff0000" />
<rect x="527" y="556" width="4" height="34" fill="#008000" />
<rect x="532" y="558" width="4" height="1" fill="#ff0000" />
<rect x="532" y="589" width="4" height="1" fill="#ff0000" />
<rect x="532" y="559" width="1" height="30" fill="#ff0000" />
<rect x="535" y="559" width="1" height="30" fill="#ff0000" />
<rect x="537" y="553" width="4" height="1" fill="#ff0000" />
<rect x="537" y="589" width="4" height="1" fill="#ff0000" />
<rect x="537" y="554" width="1" height="35" fill="#ff0000" />
<rect x="540" y="554" width="1" height="35" fill="#ff0000" />
<rect x="541" y="559" width="4" height="31" fill="#008000" />
<rect x="546" y="561" width="4" height="1" fill="#ff0000" />
<rect x="546" y="589" width="4" height="1" fill="#ff0000" />
<rect x="546" y="562" width="1" height="27" fill="#ff0000" />
<rect x="549" y="562" width="1" height="27" fill="#ff0000" />
<rect x="551" y="563" width="4" height="27" fill="#008000" />
<rect x="555" y="559" width="4" height="1" fill="#ff0000" />
<rect x="555" y="589" width="4" height="1" fill="#ff0000" />
<rect x="555" y="560" width="1" height="29" fill="#ff0000" />
<rect x="558" y="560" width="1" height="29" fill="#ff0000" />
<rect x="560" y="554" width="4" height="1" fill="#ff0000" />
<rect x="560" y="589" width="4" height="1" fill="#ff0000" />
<rect x="560" y="555" width="1" height="34" fill="#ff0000" />
<rect x="563" y="555" width="1" height="34" fill="#ff0000" />
<rect x="565" y="561" width="4" height="29" fill="#008000" />
<rect x="569" y="543" width="4" height="1" fill="#ff0000" />
<rect x="569" y="589" width="4" height="1" fill="#ff0000" />
<rect x="569" y="544" width="1" height="45" fill="#ff0000" />
<rect x="572" y="544" width="1" height="45" fill="#ff0000" />
<rect x="574" y="559" width="4" height="1" fill="#ff0000" />
<rect x="574" y="589" width="4" height="1" fill="#ff0000" />
<rect x="574" y="560" width="1" height="29" fill="#ff0000" />
<rect x="577" y="560" width="1" height="29" fill="#ff0000" />
<rect x="579" y="548" width="4" height="1" fill="#ff0000" />
<rect x="579" y="589" width="4" height="1" fill="#ff0000" />
<rect x="579" y="549" width="1" height="40" fill="#ff0000" />
<rect x="582" y="549" width="1" height="40" fill="#ff0000" />
<rect x="583" y="557" width="4" height="33" fill="#008000" />
<rect x="588" y="562" width="4" height="28" fill="#008000" />
<rect x="593" y="565" width="4" height="25" fill="#008000" />
<rect x="597" y="561" width="4" height="29" fill="#008000" />
<rect x="602" y="560" width="4" height="30" fill="#008000" />
<rect x="607" y="567" width="4" height="1" fill="#ff0000" />
<rect x="607" y="589" width="4" height="1" fill="#ff0000" />
<rect x="607" y="568" width="1" height="21" fill="#ff0000" />
<rect x="610" y="568" width="1" height="21" fill="#ff0000" />
<rect x="611" y="567" width="4" height="1" fill="#ff0000" />
<rect x="611" y="589" width="4" height="1" fill="#ff0000" />
<rect x="611" y="568" width="1" height="21" fill="#ff0000" />
<rect x="614" y="568" width="1" height="21" fill="#ff0000" />
<rect x="616" y="563" width="4" height="27" fill="#008000" />
<rect x="621" y="569" width="4" height="21" fill="#008000" />
<rect x="625" y="573" width="4" height="17" fill="#008000" />
<rect x="630" y="570" width="4" height="20" fill="#008000" />
<rect x="635" y="567" width="4" height="23" fill="#008000" />
<rect x="639" y="572" width="4" height="1" fill="#ff0000" />
<rect x="639" y="589" width="4" height="1" fill="#ff0000" />
<rect x="639" y="573" width="1" height="16" fill="#ff0000" />
<rect x="642" y="573" width="1" height="16" fill="#ff0000" />
<rect x="644" y="571" width="4" height="19" fill="#008000" />
<rect x="649" y="572" width="4" height="1" fill="#ff0000" />
<rect x="649" y="589" width="4" height="1" fill="#ff0000" />
<rect x="649" y="573" width="1" height="16" fill="#ff0000" />
<rect x="652" y="573" width="1" height="16" fill="#ff0000" />
<rect x="653" y="569" width="4" height="21" fill="#008000" />
<rect x="658" y="569" width="4" height="1" fill="#ff0000" />
<rect x="658" y="589" width="4" height="1" fill="#ff0000" />
<rect x="658" y="570" width="1" height="19" fill="#ff0000" />
<rect x="661" y="570" width="1" height="19" fill="#ff0000" />
<rect x="663" y="570" width="4" height="20" fill="#008000" />
<rect x="667" y="568" width="4" height="1" fill="#ff0000" />
<rect x="667" y="589" width="4" height="1" fill="#ff0000" />
<rect x="667" y="569" width="1" height="20" fill="#ff0000" />
<rect x="670" y="569" width="1" height="20" fill="#ff0000" />
<rect x="672" y="572" width="4" height="18" fill="#008000" />
<rect x="677" y="567" width="4" height="23" fill="#008000" />
<rect x="681" y="566" width="4" height="24" fill="#008000" />
<rect x="686" y="573" width="4" height="1" fill="#ff0000" />
<rect x="686" y="589" width="4" height="1" fill="#ff0000" />
<rect x="686" y="574" width="1" height="15" fill="#ff0000" />
<rect x="689" y="574" width="1" height="15" fill="#ff0000" />
<rect x="691" y="571" width="4" height="19" fill="#008000" />
<rect x="695" y="569" width="4" height="21" fill="#008000" />
<rect x="700" y="570" width="4" height="20" fill="#008000" />
<rect x="705" y="572" width="4" height="18" fill="#008000" />
<rect x="709" y="571" width="4" height="1" fill="#ff0000" />
<rect x="709" y="589" width="4" height="1" fill="#ff0000" />
<rect x="709" y="572" width="1" height="17" fill="#ff0000" />
<rect x="712" y="572" width="1" height="17" fill="#ff0000" />
<rect x="714" y="572" width="4" height="18" fill="#008000" />
<rect x="719" y="570" width="4" height="1" fill="#ff0000" />
<rect x="719" y="589" width="4" height="1" fill="#ff0000" />
<rect x="719" y="571" width="1" height="18" fill="#ff0000" />
<rect x="722" y="571" width="1" height="18" fill="#ff0000" />
<rect x="723" y="572" width="4" height="18" fill="#008000" />
<rect x="728" y="575" width="4" height="15" fill="#008000" />
<rect x="733" y="574" width="4" height="1" fill="#ff0000" />
<rect x="733" y="589" width="4" height="1" fill="#ff0000" />
<rect x="733" y="575" width="1" height="14" fill="#ff0000" />
<rect x="736" y="575" width="1" height="14" fill="#ff0000" />
<rect x="737" y="563" width="4" height="1" fill="#ff0000" />
<rect x="737" y="589" width="4" height="1" fill="#ff0000" />
<rect x="737" y="564" width="1" height="25" fill="#ff0000" />
<rect x="740" y="564" width="1" height="25" fill="#ff0000" />
<rect x="742" y="567" width="4" height="23" fill="#008000" />
<rect x="747" y="565" width="4" height="1" fill="#ff0000" />
<rect x="747" y="589" width="4" height="1" fill="#ff0000" />
<rect x="747" y="566" width="1" height="23" fill="#ff0000" />
<rect x="750" y="566" width="1" height="23" fill="#ff0000" />
<rect x="751" y="566" width="4" height="24" fill="#008000" />
<rect x="756" y="570" width="4" height="1" fill="#ff0000" />
<rect x="756" y="589" width="4" height="1" fill="#ff0000" />
<rect x="756" y="571" width="1" height="18" fill="#ff0000" />
<rect x="759" y="571" width="1" height="18" fill="#ff0000" />
<rect x="761" y="570" width="4" height="1" fill="#ff0000" />
<rect x="761" y="589" width="4" height="1" fill="#ff0000" />
<rect x="761" y="571" width="1" height="18" fill="#ff0000" />
<rect x="764" y="571" width="1" height="18" fill="#ff0000" />
<rect x="765" y="573" width="4" height="17" fill="#008000" />
<rect x="770" y="570" width="4" height="1" fill="#ff0000" />
<rect x="770" y="589" width="4" height="1" fill="#ff0000" />
<rect x="770" y="571" width="1" height="18" fill="#ff0000" />
<rect x="773" y="571" width="1" height="18" fill="#ff0000" />
<rect x="775" y="556" width="4" height="1" fill="#ff0000" />
<rect x="775" y="589" width="4" height="1" fill="#ff0000" />
<rect x="775" y="557" width="1" height="32" fill="#ff0000" />
<rect x="778" y="557" width="1" height="32" fill="#ff0000" />
<rect x="779" y="552" width="4" height="1" fill="#ff0000" />
<rect x="779" y="589" width="4" height="1" fill="#ff0000" />
<rect x="779" y="553" width="1" height="36" fill="#ff0000" />
<rect x="782" y="553" width="1" height="36" fill="#ff0000" />
<rect x="784" y="556" width="4" height="1" fill="#ff0000" />
<rect x="784" y="589" width="4" height="1" fill="#ff0000" />
<rect x="784" y="557" width="1" height="32" fill="#ff0000" />
<rect x="787" y="557" width="1" height="32" fill="#ff0000" />
<rect x="789" y="550" width="4" height="40" fill="#008000" />
<rect x="793" y="560" width="4" height="1" fill="#ff0000" />
<rect x="793" y="589" width="4" height="1" fill="#ff0000" />
<rect x="793" y="561" width="1" height="28" fill="#ff0000" />
<rect x="796" y="561" width="1" height="28" fill="#ff0000" />
<rect x="798" y="552" width="4" height="1" fill="#ff0000" />
<rect x="798" y="589" width="4" height="1" fill="#ff0000" />
<rect x="798" y="553" width="1" height="36" fill="#ff0000" />
<rect x="801" y="553" width="1" height="36" fill="#ff0000" />
<rect x="803" y="551" width="4" height="39" fill="#008000" />
<rect x="807" y="549" width="4" height="1" fill="#ff0000" />
<rect x="807" y="589" width="4" height="1" fill="#ff0000" />
<rect x="807" y="550" width="1" height="39" fill="#ff0000" />
<rect x="810" y="550" width="1" height="39" fill="#ff0000" />
<rect x="812" y="548" width="4" height="42" fill="#008000" />
<rect x="817" y="558" width="4" height="32" fill="#008000" />
<rect x="821" y="557" width="4" height="33" fill="#008000" />
<rect x="826" y="552" width="4" height="38" fill="#008000" />
<rect x="831" y="560" width="4" height="1" fill="#ff0000" />
<rect x="831" y="589" width="4" height="1" fill="#ff0000" />
<rect x="831" y="561" width="1" height="28" fill="#ff0000" />
<rect x="834" y="561" width="1" height="28" fill="#ff0000" />
<rect x="835" y="554" width="4" height="1" fill="#ff0000" />
<rect x="835" y="589" width="4" height="1" fill="#ff0000" />
<rect x="835" y="555" width="1" height="34" fill="#ff0000" />
<rect x="838" y="555" width="1" height="34" fill="#ff0000" />
<rect x="840" y="560" width="4" height="1" fill="#ff0000" />
<rect x="840" y="589" width="4" height="1" fill="#ff0000" />
<rect x="840" y="561" width="1" height="28" fill="#ff0000" />
<rect x="843" y="561" width="1" height="28" fill="#ff0000" />
<rect x="845" y="556" width="4" height="1" fill="#ff0000" />
<rect x="845" y="589" width="4" height="1" fill="#ff0000" />
<rect x="845" y="557" width="1" height="32" fill="#ff0000" />
<rect x="848" y="557" width="1" height="32" fill="#ff0000" />
<rect x="849" y="559" width="4" height="1" fill="#ff0000" />
<rect x="849" y="589" width="4" height="1" fill="#ff0000" />
<rect x="849" y="560" width="1" height="29" fill="#ff0000" />
<rect x="852" y="560" width="1" height="29" fill="#ff0000" />
<rect x="854" y="561" width="4" height="29" fill="#008000" />
<rect x="859" y="560" width="4" height="1" fill="#ff0000" />
<rect x="859" y="589" width="4" height="1" fill="#ff0000" />
<rect x="859" y="561" width="1" height="28" fill="#ff0000" />
<rect x="862" y="561" width="1" height="28" fill="#ff0000" />
<rect x="863" y="562" width="4" height="28" fill="#008000" />
<rect x="868" y="559" width="4" height="31" fill="#008000" />
<rect x="873" y="565" width="4" height="1" fill="#ff0000" />
<rect x="873" y="589" width="4" height="1" fill="#ff0000" />
<rect x="873" y="566" width="1" height="23" fill="#ff0000" />
<rect x="876" y="566" width="1" height="23" fill="#ff0000" />
<rect x="877" y="563" width="4" height="1" fill="#ff0000" />
<rect x="877" y="589" width="4" height="1" fill="#ff0000" />
<rect x="877" y="564" width="1" height="25" fill="#ff0000" />
<rect x="880" y="564" width="1" height="25" fill="#ff0000" />
<rect x="882" y="563" width="4" height="1" fill="#ff0000" />
<rect x="882" y="589" width="4" height="1" fill="#ff0000" />
<rect x="882" y="564" width="1" height="25" fill="#ff0000" />
<rect x="885" y="564" width="1" height="25" fill="#ff0000" />
<rect x="887" y="566" width="4" height="24" fill="#008000" />
<rect x="891" y="567" width="4" height="1" fill="#ff0000" />
<rect x="891" y="589" width="4" height="1" fill="#ff0000" />
<rect x="891" y="568" width="1" height="21" fill="#ff0000" />
<rect x="894" y="568" width="1" height="21" fill="#ff0000" />
<rect x="896" y="564" width="4" height="26" fill="#008000" />
<rect x="901" y="564" width="4" height="1" fill="#ff0000" />
<rect x="901" y="589" width="4" height="1" fill="#ff0000" />
<rect x="901" y="565" width="1" height="24" fill="#ff0000" />
<rect x="904" y="565" width="1" height="24" fill="#ff0000" />
<rect x="905" y="560" width="4" height="30" fill="#008000" />
<rect x="910" y="551" width="4" height="1" fill="#ff0000" />
<rect x="910" y="589" width="4" height="1" fill="#ff0000" />
<rect x="910" y="552" width="1" height="37" fill="#ff0000" />
<rect x="913" y="552" width="1" height="37" fill="#ff0000" />
<rect x="915" y="550" width="4" height="1" fill="#ff0000" />
<rect x="915" y="589" width="4" height="1" fill="#ff0000" />
<rect x="915" y="551" width="1" height="38" fill="#ff0000" />
<rect x="918" y="551" width="1" height="38" fill="#ff0000" />
<rect x="919" y="554" width="4" height="1" fill="#ff0000" />
<rect x="919" y="589" width="4" height="1" fill="#ff0000" />
<rect x="919" y="555" width="1" height="34" fill="#ff0000" />
<rect x="922" y="555" width="1" height="34" fill="#ff0000" />
<rect x="924" y="562" width="4" height="28" fill="#008000" />
<rect x="929" y="558" width="4" height="32" fill="#008000" />
<rect x="933" y="557" width="4" height="33" fill="#008000" />
<rect x="938" y="565" width="4" height="25" fill="#008000" />
<rect x="943" y="568" width="4" height="1" fill="#ff0000" />
<rect x="943" y="589" width="4" height="1" fill="#ff0000" />
<rect x="943" y="569" width="1" height="20" fill="#ff0000" />
<rect x="946" y="569" width="1" height="20" fill="#ff0000" />
<rect x="947" y="562" width="4" height="1" fill="#ff0000" />
<rect x="947" y="589" width="4" height="1" fill="#ff0000" />
<rect x="947" y="563" width="1" height="26" fill="#ff0000" />
<rect x="950" y="563" width="1" height="26" fill="#ff0000" />
<rect x="952" y="561" width="4" height="29" fill="#008000" />
<rect x="957" y="568" width="4" height="1" fill="#ff0000" />
<rect x="957" y="589" width="4" height="1" fill="#ff0000" />
<rect x="957" y="569" width="1" height="20" fill="#ff0000" />
<rect x="960" y="569" width="1" height="20" fill="#ff0000" />
<rect x="961" y="554" width="4" height="1" fill="#ff0000" />
<rect x="961" y="589" width="4" height="1" fill="#ff0000" />
<rect x="961" y="555" width="1" height="34" fill="#ff0000" />
<rect x="964" y="555" width="1" height="34" fill="#ff0000" />
<rect x="966" y="562" width="4" height="1" fill="#ff0000" />
<rect x="966" y="589" width="4" height="1" fill="#ff0000" />
<rect x="966" y="563" width="1" height="26" fill="#ff0000" />
<rect x="969" y="563" width="1" height="26" fill="#ff0000" />
<rect x="971" y="548" width="4" height="1" fill="#ff0000" />
<rect x="971" y="589" width="4" height="1" fill="#ff0000" />
<rect x="971" y="549" width="1" height="40" fill="#ff0000" />
<rect x="974" y="549" width="1" height="40" fill="#ff0000" />
<rect x="975" y="554" width="4" height="1" fill="#ff0000" />
<rect x="975" y="589" width="4" height="1" fill="#ff0000" />
<rect x="975" y="555" width="1" height="34" fill="#ff0000" />
<rect x="978" y="555" width="1" height="34" fill="#ff0000" />
<rect x="980" y="562" width="4" height="1" fill="#ff0000" />
<rect x="980" y="589" width="4" height="1" fill="#ff0000" />
<rect x="980" y="563" width="1" height="26" fill="#ff0000" />
<rect x="983" y="563" width="1" height="26" fill="#ff0000" />
<rect x="985" y="561" width="4" height="29" fill="#008000" />
<rect x="989" y="566" width="4" height="1" fill="#ff0000" />
<rect x="989" y="589" width="4" height="1" fill="#ff0000" />
<rect x="989" y="567" width="1" height="22" fill="#ff0000" />
<rect x="992" y="567" width="1" height="22" fill="#ff0000" />
<rect x="994" y="566" width="4" height="24" fill="#008000" />
<rect x="999" y="566" width="4" height="1" fill="#ff0000" />
<rect x="999" y="589" width="4" height="1" fill="#ff0000" />
<rect x="999" y="567" width="1" height="22" fill="#ff0000" />
<rect x="1002" y="567" width="1" height="22" fill="#ff0000" />
<rect x="1003" y="564" width="4" height="26" fill="#008000" />
<rect x="1008" y="563" width="4" height="1" fill="#ff0000" />
<rect x="1008" y="589" width="4" height="1" fill="#ff0000" />
<rect x="1008" y="564" width="1" height="25" fill="#ff0000" />
<rect x="1011" y="564" width="1" height="25" fill="#ff0000" />
<rect x="1013" y="569" width="4" height="21" fill="#008000" />
<rect x="1017" y="569" width="4" height="21" fill="#008000" />
<rect x="1022" y="565" width="4" height="25" fill="#008000" />
<rect x="1027" y="566" width="4" height="24" fill="#008000" />
<rect x="1031" y="569" width="4" height="1" fill="#ff0000" />
<rect x="1031" y="589" width="4" height="1" fill="#ff0000" />
<rect x="1031" y="570" width="1" height="19" fill="#ff0000" />
<rect x="1034" y="570" width="1" height="19" fill="#ff0000" />
<rect x="1036" y="570" width="4" height="1" fill="#ff0000" />
<rect x="1036" y="589" width="4" height="1" fill="#ff0000" />
<rect x="1036" y="571" width="1" height="18" fill="#ff0000" />
<rect x="1039" y="571" width="1" height="18" fill="#ff0000" />
</g>
</svg></body></html>
